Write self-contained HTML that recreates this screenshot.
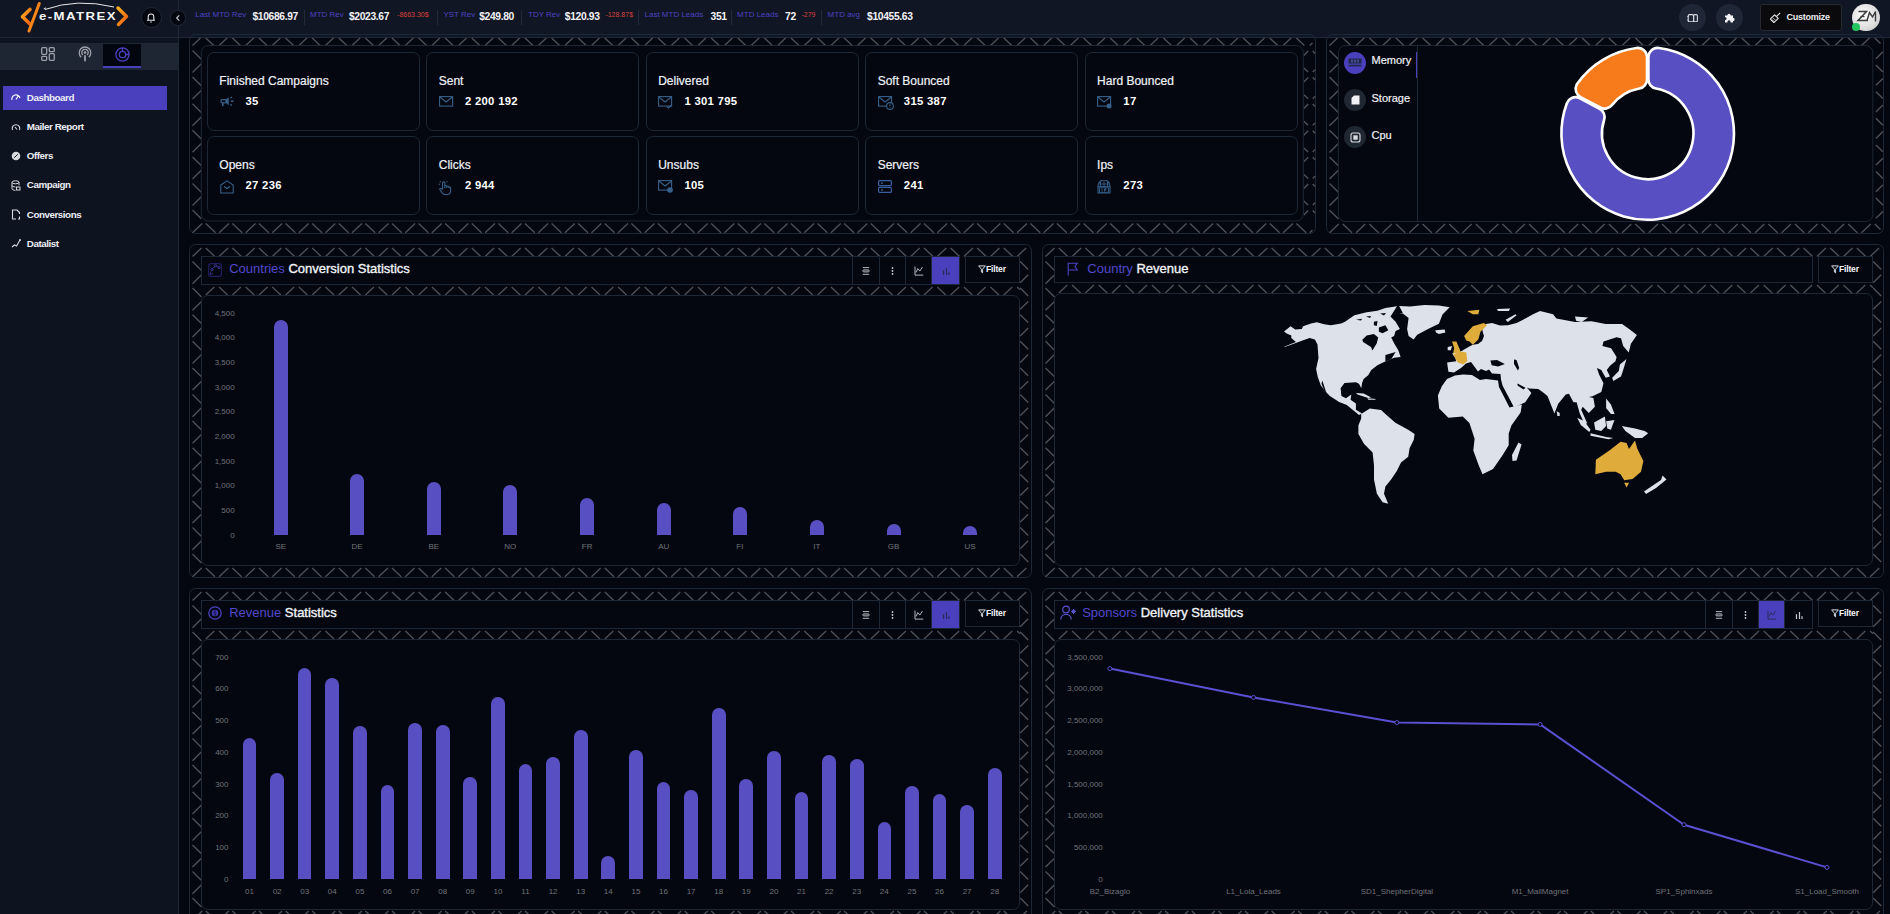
<!DOCTYPE html><html><head><meta charset="utf-8"><style>
*{box-sizing:border-box;margin:0;padding:0}
html,body{width:1890px;height:914px;overflow:hidden;background:#04070f;font-family:"Liberation Sans", sans-serif;color:#eef0f6}
.a{position:absolute}
.t{position:absolute;white-space:nowrap;line-height:1}
</style></head><body>

<div class="a" style="left:0;top:0;width:1890px;height:37px;background:#111624"></div>
<div class="a" style="left:0;top:37px;width:178px;height:877px;background:#0e1320"></div>
<div class="a" style="left:0;top:37px;width:1890px;height:1px;background:#1f2836"></div>
<div class="a" style="left:178px;top:0;width:1px;height:914px;background:#1f2836"></div>
<svg class="a" style="left:0;top:0" width="1890" height="914" viewBox="0 0 1890 914">
<g fill="none" stroke="#4d5058" stroke-width="1.4" stroke-linecap="butt">
<rect x="189.5" y="34.5" width="1126.0" height="199.0" rx="6" fill="none" stroke="#1d2735" stroke-width="1"/>
<path d="M192.5 45.5L200.5 38.0M205.8 38.0L213.8 45.5M219.1 45.5L227.1 38.0M232.4 38.0L240.4 45.5M245.7 45.5L253.7 38.0M259.0 38.0L267.0 45.5M272.3 45.5L280.3 38.0M285.6 38.0L293.6 45.5M298.9 45.5L306.9 38.0M312.2 38.0L320.2 45.5M325.5 45.5L333.5 38.0M338.8 38.0L346.8 45.5M352.1 45.5L360.1 38.0M365.4 38.0L373.4 45.5M378.7 45.5L386.7 38.0M392.0 38.0L400.0 45.5M405.3 45.5L413.3 38.0M418.6 38.0L426.6 45.5M431.9 45.5L439.9 38.0M445.2 38.0L453.2 45.5M458.5 45.5L466.5 38.0M471.8 38.0L479.8 45.5M485.1 45.5L493.1 38.0M498.4 38.0L506.4 45.5M511.7 45.5L519.7 38.0M525.0 38.0L533.0 45.5M538.3 45.5L546.3 38.0M551.6 38.0L559.6 45.5M564.9 45.5L572.9 38.0M578.2 38.0L586.2 45.5M591.5 45.5L599.5 38.0M604.8 38.0L612.8 45.5M618.1 45.5L626.1 38.0M631.4 38.0L639.4 45.5M644.7 45.5L652.7 38.0M658.0 38.0L666.0 45.5M671.3 45.5L679.3 38.0M684.6 38.0L692.6 45.5M697.9 45.5L705.9 38.0M711.2 38.0L719.2 45.5M724.5 45.5L732.5 38.0M737.8 38.0L745.8 45.5M751.1 45.5L759.1 38.0M764.4 38.0L772.4 45.5M777.7 45.5L785.7 38.0M791.0 38.0L799.0 45.5M804.3 45.5L812.3 38.0M817.6 38.0L825.6 45.5M830.9 45.5L838.9 38.0M844.2 38.0L852.2 45.5M857.5 45.5L865.5 38.0M870.8 38.0L878.8 45.5M884.1 45.5L892.1 38.0M897.4 38.0L905.4 45.5M910.7 45.5L918.7 38.0M924.0 38.0L932.0 45.5M937.3 45.5L945.3 38.0M950.6 38.0L958.6 45.5M963.9 45.5L971.9 38.0M977.2 38.0L985.2 45.5M990.5 45.5L998.5 38.0M1003.8 38.0L1011.8 45.5M1017.1 45.5L1025.1 38.0M1030.4 38.0L1038.4 45.5M1043.7 45.5L1051.7 38.0M1057.0 38.0L1065.0 45.5M1070.3 45.5L1078.3 38.0M1083.6 38.0L1091.6 45.5M1096.9 45.5L1104.9 38.0M1110.2 38.0L1118.2 45.5M1123.5 45.5L1131.5 38.0M1136.8 38.0L1144.8 45.5M1150.1 45.5L1158.1 38.0M1163.4 38.0L1171.4 45.5M1176.7 45.5L1184.7 38.0M1190.0 38.0L1198.0 45.5M1203.3 45.5L1211.3 38.0M1216.6 38.0L1224.6 45.5M1229.9 45.5L1237.9 38.0M1243.2 38.0L1251.2 45.5M1256.5 45.5L1264.5 38.0M1269.8 38.0L1277.8 45.5M1283.1 45.5L1291.1 38.0M1296.4 38.0L1304.4 45.5M1309.7 45.5L1312.5 42.9"/>
<path d="M192.5 232.7L202.3 223.5M205.8 223.5L215.6 232.7M219.1 232.7L228.9 223.5M232.4 223.5L242.2 232.7M245.7 232.7L255.5 223.5M259.0 223.5L268.8 232.7M272.3 232.7L282.1 223.5M285.6 223.5L295.4 232.7M298.9 232.7L308.7 223.5M312.2 223.5L322.0 232.7M325.5 232.7L335.3 223.5M338.8 223.5L348.6 232.7M352.1 232.7L361.9 223.5M365.4 223.5L375.2 232.7M378.7 232.7L388.5 223.5M392.0 223.5L401.8 232.7M405.3 232.7L415.1 223.5M418.6 223.5L428.4 232.7M431.9 232.7L441.7 223.5M445.2 223.5L455.0 232.7M458.5 232.7L468.3 223.5M471.8 223.5L481.6 232.7M485.1 232.7L494.9 223.5M498.4 223.5L508.2 232.7M511.7 232.7L521.5 223.5M525.0 223.5L534.8 232.7M538.3 232.7L548.1 223.5M551.6 223.5L561.4 232.7M564.9 232.7L574.7 223.5M578.2 223.5L588.0 232.7M591.5 232.7L601.3 223.5M604.8 223.5L614.6 232.7M618.1 232.7L627.9 223.5M631.4 223.5L641.2 232.7M644.7 232.7L654.5 223.5M658.0 223.5L667.8 232.7M671.3 232.7L681.1 223.5M684.6 223.5L694.4 232.7M697.9 232.7L707.7 223.5M711.2 223.5L721.0 232.7M724.5 232.7L734.3 223.5M737.8 223.5L747.6 232.7M751.1 232.7L760.9 223.5M764.4 223.5L774.2 232.7M777.7 232.7L787.5 223.5M791.0 223.5L800.8 232.7M804.3 232.7L814.1 223.5M817.6 223.5L827.4 232.7M830.9 232.7L840.7 223.5M844.2 223.5L854.0 232.7M857.5 232.7L867.3 223.5M870.8 223.5L880.6 232.7M884.1 232.7L893.9 223.5M897.4 223.5L907.2 232.7M910.7 232.7L920.5 223.5M924.0 223.5L933.8 232.7M937.3 232.7L947.1 223.5M950.6 223.5L960.4 232.7M963.9 232.7L973.7 223.5M977.2 223.5L987.0 232.7M990.5 232.7L1000.3 223.5M1003.8 223.5L1013.6 232.7M1017.1 232.7L1026.9 223.5M1030.4 223.5L1040.2 232.7M1043.7 232.7L1053.5 223.5M1057.0 223.5L1066.8 232.7M1070.3 232.7L1080.1 223.5M1083.6 223.5L1093.4 232.7M1096.9 232.7L1106.7 223.5M1110.2 223.5L1120.0 232.7M1123.5 232.7L1133.3 223.5M1136.8 223.5L1146.6 232.7M1150.1 232.7L1159.9 223.5M1163.4 223.5L1173.2 232.7M1176.7 232.7L1186.5 223.5M1190.0 223.5L1199.8 232.7M1203.3 232.7L1213.1 223.5M1216.6 223.5L1226.4 232.7M1229.9 232.7L1239.7 223.5M1243.2 223.5L1253.0 232.7M1256.5 232.7L1266.3 223.5M1269.8 223.5L1279.6 232.7M1283.1 232.7L1292.9 223.5M1296.4 223.5L1306.2 232.7M1309.7 232.7L1312.5 230.1"/>
<path d="M192.5 50.5L201.3 59.2M201.3 63.8L192.5 72.5M192.5 77.1L201.3 85.8M201.3 90.4L192.5 99.1M192.5 103.7L201.3 112.4M201.3 117.0L192.5 125.7M192.5 130.3L201.3 139.0M201.3 143.6L192.5 152.3M192.5 156.9L201.3 165.6M201.3 170.2L192.5 178.9M192.5 183.5L201.3 192.2M201.3 196.8L192.5 205.5M192.5 210.1L201.3 218.8"/>
<path d="M1303.8 55.4L1308.2 50.9M1312.7 50.9L1315.2 53.4M1303.8 68.1L1308.2 72.1M1312.7 72.1L1315.2 69.7M1303.8 82.0L1308.2 77.5M1312.7 77.5L1315.2 80.0M1303.8 94.7L1308.2 98.7M1312.7 98.7L1315.2 96.3M1303.8 108.6L1308.2 104.1M1312.7 104.1L1315.2 106.6M1303.8 121.3L1308.2 125.3M1312.7 125.3L1315.2 122.9M1303.8 135.2L1308.2 130.7M1312.7 130.7L1315.2 133.2M1303.8 147.9L1308.2 151.9M1312.7 151.9L1315.2 149.5M1303.8 161.8L1308.2 157.3M1312.7 157.3L1315.2 159.8M1303.8 174.5L1308.2 178.5M1312.7 178.5L1315.2 176.1M1303.8 188.4L1308.2 183.9M1312.7 183.9L1315.2 186.4M1303.8 201.1L1308.2 205.1M1312.7 205.1L1315.2 202.7M1303.8 215.0L1308.2 210.5M1312.7 210.5L1315.2 213.0"/>
<rect x="1326.5" y="34.5" width="557.0" height="199.0" rx="6" fill="none" stroke="#1d2735" stroke-width="1"/>
<path d="M1329.5 45.5L1337.5 38.0M1342.8 38.0L1350.8 45.5M1356.1 45.5L1364.1 38.0M1369.4 38.0L1377.4 45.5M1382.7 45.5L1390.7 38.0M1396.0 38.0L1404.0 45.5M1409.3 45.5L1417.3 38.0M1422.6 38.0L1430.6 45.5M1435.9 45.5L1443.9 38.0M1449.2 38.0L1457.2 45.5M1462.5 45.5L1470.5 38.0M1475.8 38.0L1483.8 45.5M1489.1 45.5L1497.1 38.0M1502.4 38.0L1510.4 45.5M1515.7 45.5L1523.7 38.0M1529.0 38.0L1537.0 45.5M1542.3 45.5L1550.3 38.0M1555.6 38.0L1563.6 45.5M1568.9 45.5L1576.9 38.0M1582.2 38.0L1590.2 45.5M1595.5 45.5L1603.5 38.0M1608.8 38.0L1616.8 45.5M1622.1 45.5L1630.1 38.0M1635.4 38.0L1643.4 45.5M1648.7 45.5L1656.7 38.0M1662.0 38.0L1670.0 45.5M1675.3 45.5L1683.3 38.0M1688.6 38.0L1696.6 45.5M1701.9 45.5L1709.9 38.0M1715.2 38.0L1723.2 45.5M1728.5 45.5L1736.5 38.0M1741.8 38.0L1749.8 45.5M1755.1 45.5L1763.1 38.0M1768.4 38.0L1776.4 45.5M1781.7 45.5L1789.7 38.0M1795.0 38.0L1803.0 45.5M1808.3 45.5L1816.3 38.0M1821.6 38.0L1829.6 45.5M1834.9 45.5L1842.9 38.0M1848.2 38.0L1856.2 45.5M1861.5 45.5L1869.5 38.0M1874.8 38.0L1880.5 43.4"/>
<path d="M1329.5 232.7L1338.7 224.0M1342.8 224.0L1352.0 232.7M1356.1 232.7L1365.3 224.0M1369.4 224.0L1378.6 232.7M1382.7 232.7L1391.9 224.0M1396.0 224.0L1405.2 232.7M1409.3 232.7L1418.5 224.0M1422.6 224.0L1431.8 232.7M1435.9 232.7L1445.1 224.0M1449.2 224.0L1458.4 232.7M1462.5 232.7L1471.7 224.0M1475.8 224.0L1485.0 232.7M1489.1 232.7L1498.3 224.0M1502.4 224.0L1511.6 232.7M1515.7 232.7L1524.9 224.0M1529.0 224.0L1538.2 232.7M1542.3 232.7L1551.5 224.0M1555.6 224.0L1564.8 232.7M1568.9 232.7L1578.1 224.0M1582.2 224.0L1591.4 232.7M1595.5 232.7L1604.7 224.0M1608.8 224.0L1618.0 232.7M1622.1 232.7L1631.3 224.0M1635.4 224.0L1644.6 232.7M1648.7 232.7L1657.9 224.0M1662.0 224.0L1671.2 232.7M1675.3 232.7L1684.5 224.0M1688.6 224.0L1697.8 232.7M1701.9 232.7L1711.1 224.0M1715.2 224.0L1724.4 232.7M1728.5 232.7L1737.7 224.0M1741.8 224.0L1751.0 232.7M1755.1 232.7L1764.3 224.0M1768.4 224.0L1777.6 232.7M1781.7 232.7L1790.9 224.0M1795.0 224.0L1804.2 232.7M1808.3 232.7L1817.5 224.0M1821.6 224.0L1830.8 232.7M1834.9 232.7L1844.1 224.0M1848.2 224.0L1857.4 232.7M1861.5 232.7L1870.7 224.0M1874.8 224.0L1880.5 229.4"/>
<path d="M1329.5 50.5L1338.4 59.3M1338.4 63.8L1329.5 72.6M1329.5 77.1L1338.4 85.9M1338.4 90.4L1329.5 99.2M1329.5 103.7L1338.4 112.5M1338.4 117.0L1329.5 125.8M1329.5 130.3L1338.4 139.1M1338.4 143.6L1329.5 152.4M1329.5 156.9L1338.4 165.7M1338.4 170.2L1329.5 179.0M1329.5 183.5L1338.4 192.3M1338.4 196.8L1329.5 205.6M1329.5 210.1L1338.4 218.9"/>
<path d="M1882.9 51.8L1875.9 58.7M1875.9 65.1L1882.9 72.0M1882.9 78.4L1875.9 85.3M1875.9 91.7L1882.9 98.6M1882.9 105.0L1875.9 111.9M1875.9 118.3L1882.9 125.2M1882.9 131.6L1875.9 138.5M1875.9 144.9L1882.9 151.8M1882.9 158.2L1875.9 165.1M1875.9 171.5L1882.9 178.4M1882.9 184.8L1875.9 191.7M1875.9 198.1L1882.9 205.0M1882.9 211.4L1875.9 218.3"/>
<rect x="189.5" y="244.5" width="842.0" height="333.0" rx="6" fill="none" stroke="#1d2735" stroke-width="1"/>
<path d="M192.5 256.5L201.5 248.0M205.8 248.0L214.8 256.5M219.1 256.5L228.1 248.0M232.4 248.0L241.4 256.5M245.7 256.5L254.7 248.0M259.0 248.0L268.0 256.5M272.3 256.5L281.3 248.0M285.6 248.0L294.6 256.5M298.9 256.5L307.9 248.0M312.2 248.0L321.2 256.5M325.5 256.5L334.5 248.0M338.8 248.0L347.8 256.5M352.1 256.5L361.1 248.0M365.4 248.0L374.4 256.5M378.7 256.5L387.7 248.0M392.0 248.0L401.0 256.5M405.3 256.5L414.3 248.0M418.6 248.0L427.6 256.5M431.9 256.5L440.9 248.0M445.2 248.0L454.2 256.5M458.5 256.5L467.5 248.0M471.8 248.0L480.8 256.5M485.1 256.5L494.1 248.0M498.4 248.0L507.4 256.5M511.7 256.5L520.7 248.0M525.0 248.0L534.0 256.5M538.3 256.5L547.3 248.0M551.6 248.0L560.6 256.5M564.9 256.5L573.9 248.0M578.2 248.0L587.2 256.5M591.5 256.5L600.5 248.0M604.8 248.0L613.8 256.5M618.1 256.5L627.1 248.0M631.4 248.0L640.4 256.5M644.7 256.5L653.7 248.0M658.0 248.0L667.0 256.5M671.3 256.5L680.3 248.0M684.6 248.0L693.6 256.5M697.9 256.5L706.9 248.0M711.2 248.0L720.2 256.5M724.5 256.5L733.5 248.0M737.8 248.0L746.8 256.5M751.1 256.5L760.1 248.0M764.4 248.0L773.4 256.5M777.7 256.5L786.7 248.0M791.0 248.0L800.0 256.5M804.3 256.5L813.3 248.0M817.6 248.0L826.6 256.5M830.9 256.5L839.9 248.0M844.2 248.0L853.2 256.5M857.5 256.5L866.5 248.0M870.8 248.0L879.8 256.5M884.1 256.5L893.1 248.0M897.4 248.0L906.4 256.5M910.7 256.5L919.7 248.0M924.0 248.0L933.0 256.5M937.3 256.5L946.3 248.0M950.6 248.0L959.6 256.5M963.9 256.5L972.9 248.0M977.2 248.0L986.2 256.5M990.5 256.5L999.5 248.0M1003.8 248.0L1012.8 256.5M1017.1 256.5L1026.1 248.0"/>
<path d="M192.5 576.7L201.7 568.0M205.8 568.0L215.0 576.7M219.1 576.7L228.3 568.0M232.4 568.0L241.6 576.7M245.7 576.7L254.9 568.0M259.0 568.0L268.2 576.7M272.3 576.7L281.5 568.0M285.6 568.0L294.8 576.7M298.9 576.7L308.1 568.0M312.2 568.0L321.4 576.7M325.5 576.7L334.7 568.0M338.8 568.0L348.0 576.7M352.1 576.7L361.3 568.0M365.4 568.0L374.6 576.7M378.7 576.7L387.9 568.0M392.0 568.0L401.2 576.7M405.3 576.7L414.5 568.0M418.6 568.0L427.8 576.7M431.9 576.7L441.1 568.0M445.2 568.0L454.4 576.7M458.5 576.7L467.7 568.0M471.8 568.0L481.0 576.7M485.1 576.7L494.3 568.0M498.4 568.0L507.6 576.7M511.7 576.7L520.9 568.0M525.0 568.0L534.2 576.7M538.3 576.7L547.5 568.0M551.6 568.0L560.8 576.7M564.9 576.7L574.1 568.0M578.2 568.0L587.4 576.7M591.5 576.7L600.7 568.0M604.8 568.0L614.0 576.7M618.1 576.7L627.3 568.0M631.4 568.0L640.6 576.7M644.7 576.7L653.9 568.0M658.0 568.0L667.2 576.7M671.3 576.7L680.5 568.0M684.6 568.0L693.8 576.7M697.9 576.7L707.1 568.0M711.2 568.0L720.4 576.7M724.5 576.7L733.7 568.0M737.8 568.0L747.0 576.7M751.1 576.7L760.3 568.0M764.4 568.0L773.6 576.7M777.7 576.7L786.9 568.0M791.0 568.0L800.2 576.7M804.3 576.7L813.5 568.0M817.6 568.0L826.8 576.7M830.9 576.7L840.1 568.0M844.2 568.0L853.4 576.7M857.5 576.7L866.7 568.0M870.8 568.0L880.0 576.7M884.1 576.7L893.3 568.0M897.4 568.0L906.6 576.7M910.7 576.7L919.9 568.0M924.0 568.0L933.2 576.7M937.3 576.7L946.5 568.0M950.6 568.0L959.8 576.7M963.9 576.7L973.1 568.0M977.2 568.0L986.4 576.7M990.5 576.7L999.7 568.0M1003.8 568.0L1013.0 576.7M1017.1 576.7L1026.3 568.0"/>
<path d="M192.6 257.0L192.5 257.1M192.5 261.5L201.5 270.4M201.5 274.8L192.5 283.7M192.5 288.1L201.5 297.0M201.5 301.4L192.5 310.3M192.5 314.7L201.5 323.6M201.5 328.0L192.5 336.9M192.5 341.3L201.5 350.2M201.5 354.6L192.5 363.5M192.5 367.9L201.5 376.8M201.5 381.2L192.5 390.1M192.5 394.5L201.5 403.4M201.5 407.8L192.5 416.7M192.5 421.1L201.5 430.0M201.5 434.4L192.5 443.3M192.5 447.7L201.5 456.6M201.5 461.0L192.5 469.9M192.5 474.3L201.5 483.2M201.5 487.6L192.5 496.5M192.5 500.9L201.5 509.8M201.5 514.2L192.5 523.1M192.5 527.5L201.5 536.4M201.5 540.8L192.5 549.7M192.5 554.1L201.5 563.0"/>
<path d="M1020.2 261.5L1028.2 269.4M1028.2 274.8L1020.2 282.7M1020.2 288.1L1028.2 296.0M1028.2 301.4L1020.2 309.3M1020.2 314.7L1028.2 322.6M1028.2 328.0L1020.2 335.9M1020.2 341.3L1028.2 349.2M1028.2 354.6L1020.2 362.5M1020.2 367.9L1028.2 375.8M1028.2 381.2L1020.2 389.1M1020.2 394.5L1028.2 402.4M1028.2 407.8L1020.2 415.7M1020.2 421.1L1028.2 429.0M1028.2 434.4L1020.2 442.3M1020.2 447.7L1028.2 455.6M1028.2 461.0L1020.2 468.9M1020.2 474.3L1028.2 482.2M1028.2 487.6L1020.2 495.5M1020.2 500.9L1028.2 508.8M1028.2 514.2L1020.2 522.1M1020.2 527.5L1028.2 535.4M1028.2 540.8L1020.2 548.7M1020.2 554.1L1028.2 562.0"/>
<path d="M205.8 295.0L214.3 287.0M219.1 287.0L227.6 295.0M232.4 295.0L240.9 287.0M245.7 287.0L254.2 295.0M259.0 295.0L267.5 287.0M272.3 287.0L280.8 295.0M285.6 295.0L294.1 287.0M298.9 287.0L307.4 295.0M312.2 295.0L320.7 287.0M325.5 287.0L334.0 295.0M338.8 295.0L347.3 287.0M352.1 287.0L360.6 295.0M365.4 295.0L373.9 287.0M378.7 287.0L387.2 295.0M392.0 295.0L400.5 287.0M405.3 287.0L413.8 295.0M418.6 295.0L427.1 287.0M431.9 287.0L440.4 295.0M445.2 295.0L453.7 287.0M458.5 287.0L467.0 295.0M471.8 295.0L480.3 287.0M485.1 287.0L493.6 295.0M498.4 295.0L506.9 287.0M511.7 287.0L520.2 295.0M525.0 295.0L533.5 287.0M538.3 287.0L546.8 295.0M551.6 295.0L560.1 287.0M564.9 287.0L573.4 295.0M578.2 295.0L586.7 287.0M591.5 287.0L600.0 295.0M604.8 295.0L613.3 287.0M618.1 287.0L626.6 295.0M631.4 295.0L639.9 287.0M644.7 287.0L653.2 295.0M658.0 295.0L666.5 287.0M671.3 287.0L679.8 295.0M684.6 295.0L693.1 287.0M697.9 287.0L706.4 295.0M711.2 295.0L719.7 287.0M724.5 287.0L733.0 295.0M737.8 295.0L746.3 287.0M751.1 287.0L759.6 295.0M764.4 295.0L772.9 287.0M777.7 287.0L786.2 295.0M791.0 295.0L799.5 287.0M804.3 287.0L812.8 295.0M817.6 295.0L826.1 287.0M830.9 287.0L839.4 295.0M844.2 295.0L852.7 287.0M857.5 287.0L866.0 295.0M870.8 295.0L879.3 287.0M884.1 287.0L892.6 295.0M897.4 295.0L905.9 287.0M910.7 287.0L919.2 295.0M924.0 295.0L932.5 287.0M937.3 287.0L945.8 295.0M950.6 295.0L959.1 287.0M963.9 287.0L972.4 295.0M977.2 295.0L985.7 287.0M990.5 287.0L999.0 295.0M1003.8 295.0L1012.3 287.0M1017.1 287.0L1020.0 289.7"/>
<rect x="1042.5" y="244.5" width="841.0" height="333.0" rx="6" fill="none" stroke="#1d2735" stroke-width="1"/>
<path d="M1045.5 256.5L1054.5 248.0M1058.8 248.0L1067.8 256.5M1072.1 256.5L1081.1 248.0M1085.4 248.0L1094.4 256.5M1098.7 256.5L1107.7 248.0M1112.0 248.0L1121.0 256.5M1125.3 256.5L1134.3 248.0M1138.6 248.0L1147.6 256.5M1151.9 256.5L1160.9 248.0M1165.2 248.0L1174.2 256.5M1178.5 256.5L1187.5 248.0M1191.8 248.0L1200.8 256.5M1205.1 256.5L1214.1 248.0M1218.4 248.0L1227.4 256.5M1231.7 256.5L1240.7 248.0M1245.0 248.0L1254.0 256.5M1258.3 256.5L1267.3 248.0M1271.6 248.0L1280.6 256.5M1284.9 256.5L1293.9 248.0M1298.2 248.0L1307.2 256.5M1311.5 256.5L1320.5 248.0M1324.8 248.0L1333.8 256.5M1338.1 256.5L1347.1 248.0M1351.4 248.0L1360.4 256.5M1364.7 256.5L1373.7 248.0M1378.0 248.0L1387.0 256.5M1391.3 256.5L1400.3 248.0M1404.6 248.0L1413.6 256.5M1417.9 256.5L1426.9 248.0M1431.2 248.0L1440.2 256.5M1444.5 256.5L1453.5 248.0M1457.8 248.0L1466.8 256.5M1471.1 256.5L1480.1 248.0M1484.4 248.0L1493.4 256.5M1497.7 256.5L1506.7 248.0M1511.0 248.0L1520.0 256.5M1524.3 256.5L1533.3 248.0M1537.6 248.0L1546.6 256.5M1550.9 256.5L1559.9 248.0M1564.2 248.0L1573.2 256.5M1577.5 256.5L1586.5 248.0M1590.8 248.0L1599.8 256.5M1604.1 256.5L1613.1 248.0M1617.4 248.0L1626.4 256.5M1630.7 256.5L1639.7 248.0M1644.0 248.0L1653.0 256.5M1657.3 256.5L1666.3 248.0M1670.6 248.0L1679.6 256.5M1683.9 256.5L1692.9 248.0M1697.2 248.0L1706.2 256.5M1710.5 256.5L1719.5 248.0M1723.8 248.0L1732.8 256.5M1737.1 256.5L1746.1 248.0M1750.4 248.0L1759.4 256.5M1763.7 256.5L1772.7 248.0M1777.0 248.0L1786.0 256.5M1790.3 256.5L1799.3 248.0M1803.6 248.0L1812.6 256.5M1816.9 256.5L1825.9 248.0M1830.2 248.0L1839.2 256.5M1843.5 256.5L1852.5 248.0M1856.8 248.0L1865.8 256.5M1870.1 256.5L1879.1 248.0"/>
<path d="M1045.5 576.7L1054.7 568.0M1058.8 568.0L1068.0 576.7M1072.1 576.7L1081.3 568.0M1085.4 568.0L1094.6 576.7M1098.7 576.7L1107.9 568.0M1112.0 568.0L1121.2 576.7M1125.3 576.7L1134.5 568.0M1138.6 568.0L1147.8 576.7M1151.9 576.7L1161.1 568.0M1165.2 568.0L1174.4 576.7M1178.5 576.7L1187.7 568.0M1191.8 568.0L1201.0 576.7M1205.1 576.7L1214.3 568.0M1218.4 568.0L1227.6 576.7M1231.7 576.7L1240.9 568.0M1245.0 568.0L1254.2 576.7M1258.3 576.7L1267.5 568.0M1271.6 568.0L1280.8 576.7M1284.9 576.7L1294.1 568.0M1298.2 568.0L1307.4 576.7M1311.5 576.7L1320.7 568.0M1324.8 568.0L1334.0 576.7M1338.1 576.7L1347.3 568.0M1351.4 568.0L1360.6 576.7M1364.7 576.7L1373.9 568.0M1378.0 568.0L1387.2 576.7M1391.3 576.7L1400.5 568.0M1404.6 568.0L1413.8 576.7M1417.9 576.7L1427.1 568.0M1431.2 568.0L1440.4 576.7M1444.5 576.7L1453.7 568.0M1457.8 568.0L1467.0 576.7M1471.1 576.7L1480.3 568.0M1484.4 568.0L1493.6 576.7M1497.7 576.7L1506.9 568.0M1511.0 568.0L1520.2 576.7M1524.3 576.7L1533.5 568.0M1537.6 568.0L1546.8 576.7M1550.9 576.7L1560.1 568.0M1564.2 568.0L1573.4 576.7M1577.5 576.7L1586.7 568.0M1590.8 568.0L1600.0 576.7M1604.1 576.7L1613.3 568.0M1617.4 568.0L1626.6 576.7M1630.7 576.7L1639.9 568.0M1644.0 568.0L1653.2 576.7M1657.3 576.7L1666.5 568.0M1670.6 568.0L1679.8 576.7M1683.9 576.7L1693.1 568.0M1697.2 568.0L1706.4 576.7M1710.5 576.7L1719.7 568.0M1723.8 568.0L1733.0 576.7M1737.1 576.7L1746.3 568.0M1750.4 568.0L1759.6 576.7M1763.7 576.7L1772.9 568.0M1777.0 568.0L1786.2 576.7M1790.3 576.7L1799.5 568.0M1803.6 568.0L1812.8 576.7M1816.9 576.7L1826.1 568.0M1830.2 568.0L1839.4 576.7M1843.5 576.7L1852.7 568.0M1856.8 568.0L1866.0 576.7M1870.1 576.7L1879.3 568.0"/>
<path d="M1045.6 257.0L1045.5 257.1M1045.5 261.5L1054.5 270.4M1054.5 274.8L1045.5 283.7M1045.5 288.1L1054.5 297.0M1054.5 301.4L1045.5 310.3M1045.5 314.7L1054.5 323.6M1054.5 328.0L1045.5 336.9M1045.5 341.3L1054.5 350.2M1054.5 354.6L1045.5 363.5M1045.5 367.9L1054.5 376.8M1054.5 381.2L1045.5 390.1M1045.5 394.5L1054.5 403.4M1054.5 407.8L1045.5 416.7M1045.5 421.1L1054.5 430.0M1054.5 434.4L1045.5 443.3M1045.5 447.7L1054.5 456.6M1054.5 461.0L1045.5 469.9M1045.5 474.3L1054.5 483.2M1054.5 487.6L1045.5 496.5M1045.5 500.9L1054.5 509.8M1054.5 514.2L1045.5 523.1M1045.5 527.5L1054.5 536.4M1054.5 540.8L1045.5 549.7M1045.5 554.1L1054.5 563.0"/>
<path d="M1873.2 261.5L1881.2 269.4M1881.2 274.8L1873.2 282.7M1873.2 288.1L1881.2 296.0M1881.2 301.4L1873.2 309.3M1873.2 314.7L1881.2 322.6M1881.2 328.0L1873.2 335.9M1873.2 341.3L1881.2 349.2M1881.2 354.6L1873.2 362.5M1873.2 367.9L1881.2 375.8M1881.2 381.2L1873.2 389.1M1873.2 394.5L1881.2 402.4M1881.2 407.8L1873.2 415.7M1873.2 421.1L1881.2 429.0M1881.2 434.4L1873.2 442.3M1873.2 447.7L1881.2 455.6M1881.2 461.0L1873.2 468.9M1873.2 474.3L1881.2 482.2M1881.2 487.6L1873.2 495.5M1873.2 500.9L1881.2 508.8M1881.2 514.2L1873.2 522.1M1873.2 527.5L1881.2 535.4M1881.2 540.8L1873.2 548.7M1873.2 554.1L1881.2 562.0"/>
<path d="M1058.8 293.0L1067.3 285.0M1072.1 285.0L1080.6 293.0M1085.4 293.0L1093.9 285.0M1098.7 285.0L1107.2 293.0M1112.0 293.0L1120.5 285.0M1125.3 285.0L1133.8 293.0M1138.6 293.0L1147.1 285.0M1151.9 285.0L1160.4 293.0M1165.2 293.0L1173.7 285.0M1178.5 285.0L1187.0 293.0M1191.8 293.0L1200.3 285.0M1205.1 285.0L1213.6 293.0M1218.4 293.0L1226.9 285.0M1231.7 285.0L1240.2 293.0M1245.0 293.0L1253.5 285.0M1258.3 285.0L1266.8 293.0M1271.6 293.0L1280.1 285.0M1284.9 285.0L1293.4 293.0M1298.2 293.0L1306.7 285.0M1311.5 285.0L1320.0 293.0M1324.8 293.0L1333.3 285.0M1338.1 285.0L1346.6 293.0M1351.4 293.0L1359.9 285.0M1364.7 285.0L1373.2 293.0M1378.0 293.0L1386.5 285.0M1391.3 285.0L1399.8 293.0M1404.6 293.0L1413.1 285.0M1417.9 285.0L1426.4 293.0M1431.2 293.0L1439.7 285.0M1444.5 285.0L1453.0 293.0M1457.8 293.0L1466.3 285.0M1471.1 285.0L1479.6 293.0M1484.4 293.0L1492.9 285.0M1497.7 285.0L1506.2 293.0M1511.0 293.0L1519.5 285.0M1524.3 285.0L1532.8 293.0M1537.6 293.0L1546.1 285.0M1550.9 285.0L1559.4 293.0M1564.2 293.0L1572.7 285.0M1577.5 285.0L1586.0 293.0M1590.8 293.0L1599.3 285.0M1604.1 285.0L1612.6 293.0M1617.4 293.0L1625.9 285.0M1630.7 285.0L1639.2 293.0M1644.0 293.0L1652.5 285.0M1657.3 285.0L1665.8 293.0M1670.6 293.0L1679.1 285.0M1683.9 285.0L1692.4 293.0M1697.2 293.0L1705.7 285.0M1710.5 285.0L1719.0 293.0M1723.8 293.0L1732.3 285.0M1737.1 285.0L1745.6 293.0M1750.4 293.0L1758.9 285.0M1763.7 285.0L1772.2 293.0M1777.0 293.0L1785.5 285.0M1790.3 285.0L1798.8 293.0M1803.6 293.0L1812.1 285.0M1816.9 285.0L1825.4 293.0M1830.2 293.0L1838.7 285.0M1843.5 285.0L1852.0 293.0M1856.8 293.0L1865.3 285.0M1870.1 285.0L1873.0 287.7"/>
<rect x="189.5" y="588.5" width="842.0" height="332.5" rx="6" fill="none" stroke="#1d2735" stroke-width="1"/>
<path d="M192.5 600.5L201.5 592.0M205.8 592.0L214.8 600.5M219.1 600.5L228.1 592.0M232.4 592.0L241.4 600.5M245.7 600.5L254.7 592.0M259.0 592.0L268.0 600.5M272.3 600.5L281.3 592.0M285.6 592.0L294.6 600.5M298.9 600.5L307.9 592.0M312.2 592.0L321.2 600.5M325.5 600.5L334.5 592.0M338.8 592.0L347.8 600.5M352.1 600.5L361.1 592.0M365.4 592.0L374.4 600.5M378.7 600.5L387.7 592.0M392.0 592.0L401.0 600.5M405.3 600.5L414.3 592.0M418.6 592.0L427.6 600.5M431.9 600.5L440.9 592.0M445.2 592.0L454.2 600.5M458.5 600.5L467.5 592.0M471.8 592.0L480.8 600.5M485.1 600.5L494.1 592.0M498.4 592.0L507.4 600.5M511.7 600.5L520.7 592.0M525.0 592.0L534.0 600.5M538.3 600.5L547.3 592.0M551.6 592.0L560.6 600.5M564.9 600.5L573.9 592.0M578.2 592.0L587.2 600.5M591.5 600.5L600.5 592.0M604.8 592.0L613.8 600.5M618.1 600.5L627.1 592.0M631.4 592.0L640.4 600.5M644.7 600.5L653.7 592.0M658.0 592.0L667.0 600.5M671.3 600.5L680.3 592.0M684.6 592.0L693.6 600.5M697.9 600.5L706.9 592.0M711.2 592.0L720.2 600.5M724.5 600.5L733.5 592.0M737.8 592.0L746.8 600.5M751.1 600.5L760.1 592.0M764.4 592.0L773.4 600.5M777.7 600.5L786.7 592.0M791.0 592.0L800.0 600.5M804.3 600.5L813.3 592.0M817.6 592.0L826.6 600.5M830.9 600.5L839.9 592.0M844.2 592.0L853.2 600.5M857.5 600.5L866.5 592.0M870.8 592.0L879.8 600.5M884.1 600.5L893.1 592.0M897.4 592.0L906.4 600.5M910.7 600.5L919.7 592.0M924.0 592.0L933.0 600.5M937.3 600.5L946.3 592.0M950.6 592.0L959.6 600.5M963.9 600.5L972.9 592.0M977.2 592.0L986.2 600.5M990.5 600.5L999.5 592.0M1003.8 592.0L1012.8 600.5M1017.1 600.5L1026.1 592.0"/>
<path d="M192.5 920.2L202.3 911.0M205.8 911.0L215.6 920.2M219.1 920.2L228.9 911.0M232.4 911.0L242.2 920.2M245.7 920.2L255.5 911.0M259.0 911.0L268.8 920.2M272.3 920.2L282.1 911.0M285.6 911.0L295.4 920.2M298.9 920.2L308.7 911.0M312.2 911.0L322.0 920.2M325.5 920.2L335.3 911.0M338.8 911.0L348.6 920.2M352.1 920.2L361.9 911.0M365.4 911.0L375.2 920.2M378.7 920.2L388.5 911.0M392.0 911.0L401.8 920.2M405.3 920.2L415.1 911.0M418.6 911.0L428.4 920.2M431.9 920.2L441.7 911.0M445.2 911.0L455.0 920.2M458.5 920.2L468.3 911.0M471.8 911.0L481.6 920.2M485.1 920.2L494.9 911.0M498.4 911.0L508.2 920.2M511.7 920.2L521.5 911.0M525.0 911.0L534.8 920.2M538.3 920.2L548.1 911.0M551.6 911.0L561.4 920.2M564.9 920.2L574.7 911.0M578.2 911.0L588.0 920.2M591.5 920.2L601.3 911.0M604.8 911.0L614.6 920.2M618.1 920.2L627.9 911.0M631.4 911.0L641.2 920.2M644.7 920.2L654.5 911.0M658.0 911.0L667.8 920.2M671.3 920.2L681.1 911.0M684.6 911.0L694.4 920.2M697.9 920.2L707.7 911.0M711.2 911.0L721.0 920.2M724.5 920.2L734.3 911.0M737.8 911.0L747.6 920.2M751.1 920.2L760.9 911.0M764.4 911.0L774.2 920.2M777.7 920.2L787.5 911.0M791.0 911.0L800.8 920.2M804.3 920.2L814.1 911.0M817.6 911.0L827.4 920.2M830.9 920.2L840.7 911.0M844.2 911.0L854.0 920.2M857.5 920.2L867.3 911.0M870.8 911.0L880.6 920.2M884.1 920.2L893.9 911.0M897.4 911.0L907.2 920.2M910.7 920.2L920.5 911.0M924.0 911.0L933.8 920.2M937.3 920.2L947.1 911.0M950.6 911.0L960.4 920.2M963.9 920.2L973.7 911.0M977.2 911.0L987.0 920.2M990.5 920.2L1000.3 911.0M1003.8 911.0L1013.6 920.2M1017.1 920.2L1026.9 911.0"/>
<path d="M192.6 601.0L192.5 601.1M192.5 605.5L201.5 614.4M201.5 618.8L192.5 627.7M192.5 632.1L201.5 641.0M201.5 645.4L192.5 654.3M192.5 658.7L201.5 667.6M201.5 672.0L192.5 680.9M192.5 685.3L201.5 694.2M201.5 698.6L192.5 707.5M192.5 711.9L201.5 720.8M201.5 725.2L192.5 734.1M192.5 738.5L201.5 747.4M201.5 751.8L192.5 760.7M192.5 765.1L201.5 774.0M201.5 778.4L192.5 787.3M192.5 791.7L201.5 800.6M201.5 805.0L192.5 813.9M192.5 818.3L201.5 827.2M201.5 831.6L192.5 840.5M192.5 844.9L201.5 853.8M201.5 858.2L192.5 867.1M192.5 871.5L201.5 880.4M201.5 884.8L192.5 893.7M192.5 898.1L201.5 907.0"/>
<path d="M1020.2 605.5L1028.2 613.4M1028.2 618.8L1020.2 626.7M1020.2 632.1L1028.2 640.0M1028.2 645.4L1020.2 653.3M1020.2 658.7L1028.2 666.6M1028.2 672.0L1020.2 679.9M1020.2 685.3L1028.2 693.2M1028.2 698.6L1020.2 706.5M1020.2 711.9L1028.2 719.8M1028.2 725.2L1020.2 733.1M1020.2 738.5L1028.2 746.4M1028.2 751.8L1020.2 759.7M1020.2 765.1L1028.2 773.0M1028.2 778.4L1020.2 786.3M1020.2 791.7L1028.2 799.6M1028.2 805.0L1020.2 812.9M1020.2 818.3L1028.2 826.2M1028.2 831.6L1020.2 839.5M1020.2 844.9L1028.2 852.8M1028.2 858.2L1020.2 866.1M1020.2 871.5L1028.2 879.4M1028.2 884.8L1020.2 892.7M1020.2 898.1L1028.2 906.0"/>
<path d="M205.8 639.0L214.3 631.0M219.1 631.0L227.6 639.0M232.4 639.0L240.9 631.0M245.7 631.0L254.2 639.0M259.0 639.0L267.5 631.0M272.3 631.0L280.8 639.0M285.6 639.0L294.1 631.0M298.9 631.0L307.4 639.0M312.2 639.0L320.7 631.0M325.5 631.0L334.0 639.0M338.8 639.0L347.3 631.0M352.1 631.0L360.6 639.0M365.4 639.0L373.9 631.0M378.7 631.0L387.2 639.0M392.0 639.0L400.5 631.0M405.3 631.0L413.8 639.0M418.6 639.0L427.1 631.0M431.9 631.0L440.4 639.0M445.2 639.0L453.7 631.0M458.5 631.0L467.0 639.0M471.8 639.0L480.3 631.0M485.1 631.0L493.6 639.0M498.4 639.0L506.9 631.0M511.7 631.0L520.2 639.0M525.0 639.0L533.5 631.0M538.3 631.0L546.8 639.0M551.6 639.0L560.1 631.0M564.9 631.0L573.4 639.0M578.2 639.0L586.7 631.0M591.5 631.0L600.0 639.0M604.8 639.0L613.3 631.0M618.1 631.0L626.6 639.0M631.4 639.0L639.9 631.0M644.7 631.0L653.2 639.0M658.0 639.0L666.5 631.0M671.3 631.0L679.8 639.0M684.6 639.0L693.1 631.0M697.9 631.0L706.4 639.0M711.2 639.0L719.7 631.0M724.5 631.0L733.0 639.0M737.8 639.0L746.3 631.0M751.1 631.0L759.6 639.0M764.4 639.0L772.9 631.0M777.7 631.0L786.2 639.0M791.0 639.0L799.5 631.0M804.3 631.0L812.8 639.0M817.6 639.0L826.1 631.0M830.9 631.0L839.4 639.0M844.2 639.0L852.7 631.0M857.5 631.0L866.0 639.0M870.8 639.0L879.3 631.0M884.1 631.0L892.6 639.0M897.4 639.0L905.9 631.0M910.7 631.0L919.2 639.0M924.0 639.0L932.5 631.0M937.3 631.0L945.8 639.0M950.6 639.0L959.1 631.0M963.9 631.0L972.4 639.0M977.2 639.0L985.7 631.0M990.5 631.0L999.0 639.0M1003.8 639.0L1012.3 631.0M1017.1 631.0L1020.0 633.7"/>
<rect x="1042.5" y="588.5" width="841.0" height="332.5" rx="6" fill="none" stroke="#1d2735" stroke-width="1"/>
<path d="M1045.5 600.5L1054.5 592.0M1058.8 592.0L1067.8 600.5M1072.1 600.5L1081.1 592.0M1085.4 592.0L1094.4 600.5M1098.7 600.5L1107.7 592.0M1112.0 592.0L1121.0 600.5M1125.3 600.5L1134.3 592.0M1138.6 592.0L1147.6 600.5M1151.9 600.5L1160.9 592.0M1165.2 592.0L1174.2 600.5M1178.5 600.5L1187.5 592.0M1191.8 592.0L1200.8 600.5M1205.1 600.5L1214.1 592.0M1218.4 592.0L1227.4 600.5M1231.7 600.5L1240.7 592.0M1245.0 592.0L1254.0 600.5M1258.3 600.5L1267.3 592.0M1271.6 592.0L1280.6 600.5M1284.9 600.5L1293.9 592.0M1298.2 592.0L1307.2 600.5M1311.5 600.5L1320.5 592.0M1324.8 592.0L1333.8 600.5M1338.1 600.5L1347.1 592.0M1351.4 592.0L1360.4 600.5M1364.7 600.5L1373.7 592.0M1378.0 592.0L1387.0 600.5M1391.3 600.5L1400.3 592.0M1404.6 592.0L1413.6 600.5M1417.9 600.5L1426.9 592.0M1431.2 592.0L1440.2 600.5M1444.5 600.5L1453.5 592.0M1457.8 592.0L1466.8 600.5M1471.1 600.5L1480.1 592.0M1484.4 592.0L1493.4 600.5M1497.7 600.5L1506.7 592.0M1511.0 592.0L1520.0 600.5M1524.3 600.5L1533.3 592.0M1537.6 592.0L1546.6 600.5M1550.9 600.5L1559.9 592.0M1564.2 592.0L1573.2 600.5M1577.5 600.5L1586.5 592.0M1590.8 592.0L1599.8 600.5M1604.1 600.5L1613.1 592.0M1617.4 592.0L1626.4 600.5M1630.7 600.5L1639.7 592.0M1644.0 592.0L1653.0 600.5M1657.3 600.5L1666.3 592.0M1670.6 592.0L1679.6 600.5M1683.9 600.5L1692.9 592.0M1697.2 592.0L1706.2 600.5M1710.5 600.5L1719.5 592.0M1723.8 592.0L1732.8 600.5M1737.1 600.5L1746.1 592.0M1750.4 592.0L1759.4 600.5M1763.7 600.5L1772.7 592.0M1777.0 592.0L1786.0 600.5M1790.3 600.5L1799.3 592.0M1803.6 592.0L1812.6 600.5M1816.9 600.5L1825.9 592.0M1830.2 592.0L1839.2 600.5M1843.5 600.5L1852.5 592.0M1856.8 592.0L1865.8 600.5M1870.1 600.5L1879.1 592.0"/>
<path d="M1045.5 920.2L1055.3 911.0M1058.8 911.0L1068.6 920.2M1072.1 920.2L1081.9 911.0M1085.4 911.0L1095.2 920.2M1098.7 920.2L1108.5 911.0M1112.0 911.0L1121.8 920.2M1125.3 920.2L1135.1 911.0M1138.6 911.0L1148.4 920.2M1151.9 920.2L1161.7 911.0M1165.2 911.0L1175.0 920.2M1178.5 920.2L1188.3 911.0M1191.8 911.0L1201.6 920.2M1205.1 920.2L1214.9 911.0M1218.4 911.0L1228.2 920.2M1231.7 920.2L1241.5 911.0M1245.0 911.0L1254.8 920.2M1258.3 920.2L1268.1 911.0M1271.6 911.0L1281.4 920.2M1284.9 920.2L1294.7 911.0M1298.2 911.0L1308.0 920.2M1311.5 920.2L1321.3 911.0M1324.8 911.0L1334.6 920.2M1338.1 920.2L1347.9 911.0M1351.4 911.0L1361.2 920.2M1364.7 920.2L1374.5 911.0M1378.0 911.0L1387.8 920.2M1391.3 920.2L1401.1 911.0M1404.6 911.0L1414.4 920.2M1417.9 920.2L1427.7 911.0M1431.2 911.0L1441.0 920.2M1444.5 920.2L1454.3 911.0M1457.8 911.0L1467.6 920.2M1471.1 920.2L1480.9 911.0M1484.4 911.0L1494.2 920.2M1497.7 920.2L1507.5 911.0M1511.0 911.0L1520.8 920.2M1524.3 920.2L1534.1 911.0M1537.6 911.0L1547.4 920.2M1550.9 920.2L1560.7 911.0M1564.2 911.0L1574.0 920.2M1577.5 920.2L1587.3 911.0M1590.8 911.0L1600.6 920.2M1604.1 920.2L1613.9 911.0M1617.4 911.0L1627.2 920.2M1630.7 920.2L1640.5 911.0M1644.0 911.0L1653.8 920.2M1657.3 920.2L1667.1 911.0M1670.6 911.0L1680.4 920.2M1683.9 920.2L1693.7 911.0M1697.2 911.0L1707.0 920.2M1710.5 920.2L1720.3 911.0M1723.8 911.0L1733.6 920.2M1737.1 920.2L1746.9 911.0M1750.4 911.0L1760.2 920.2M1763.7 920.2L1773.5 911.0M1777.0 911.0L1786.8 920.2M1790.3 920.2L1800.1 911.0M1803.6 911.0L1813.4 920.2M1816.9 920.2L1826.7 911.0M1830.2 911.0L1840.0 920.2M1843.5 920.2L1853.3 911.0M1856.8 911.0L1866.6 920.2M1870.1 920.2L1879.9 911.0"/>
<path d="M1045.6 601.0L1045.5 601.1M1045.5 605.5L1054.5 614.4M1054.5 618.8L1045.5 627.7M1045.5 632.1L1054.5 641.0M1054.5 645.4L1045.5 654.3M1045.5 658.7L1054.5 667.6M1054.5 672.0L1045.5 680.9M1045.5 685.3L1054.5 694.2M1054.5 698.6L1045.5 707.5M1045.5 711.9L1054.5 720.8M1054.5 725.2L1045.5 734.1M1045.5 738.5L1054.5 747.4M1054.5 751.8L1045.5 760.7M1045.5 765.1L1054.5 774.0M1054.5 778.4L1045.5 787.3M1045.5 791.7L1054.5 800.6M1054.5 805.0L1045.5 813.9M1045.5 818.3L1054.5 827.2M1054.5 831.6L1045.5 840.5M1045.5 844.9L1054.5 853.8M1054.5 858.2L1045.5 867.1M1045.5 871.5L1054.5 880.4M1054.5 884.8L1045.5 893.7M1045.5 898.1L1054.5 907.0"/>
<path d="M1873.2 605.5L1881.2 613.4M1881.2 618.8L1873.2 626.7M1873.2 632.1L1881.2 640.0M1881.2 645.4L1873.2 653.3M1873.2 658.7L1881.2 666.6M1881.2 672.0L1873.2 679.9M1873.2 685.3L1881.2 693.2M1881.2 698.6L1873.2 706.5M1873.2 711.9L1881.2 719.8M1881.2 725.2L1873.2 733.1M1873.2 738.5L1881.2 746.4M1881.2 751.8L1873.2 759.7M1873.2 765.1L1881.2 773.0M1881.2 778.4L1873.2 786.3M1873.2 791.7L1881.2 799.6M1881.2 805.0L1873.2 812.9M1873.2 818.3L1881.2 826.2M1881.2 831.6L1873.2 839.5M1873.2 844.9L1881.2 852.8M1881.2 858.2L1873.2 866.1M1873.2 871.5L1881.2 879.4M1881.2 884.8L1873.2 892.7M1873.2 898.1L1881.2 906.0"/>
<path d="M1058.8 639.0L1067.3 631.0M1072.1 631.0L1080.6 639.0M1085.4 639.0L1093.9 631.0M1098.7 631.0L1107.2 639.0M1112.0 639.0L1120.5 631.0M1125.3 631.0L1133.8 639.0M1138.6 639.0L1147.1 631.0M1151.9 631.0L1160.4 639.0M1165.2 639.0L1173.7 631.0M1178.5 631.0L1187.0 639.0M1191.8 639.0L1200.3 631.0M1205.1 631.0L1213.6 639.0M1218.4 639.0L1226.9 631.0M1231.7 631.0L1240.2 639.0M1245.0 639.0L1253.5 631.0M1258.3 631.0L1266.8 639.0M1271.6 639.0L1280.1 631.0M1284.9 631.0L1293.4 639.0M1298.2 639.0L1306.7 631.0M1311.5 631.0L1320.0 639.0M1324.8 639.0L1333.3 631.0M1338.1 631.0L1346.6 639.0M1351.4 639.0L1359.9 631.0M1364.7 631.0L1373.2 639.0M1378.0 639.0L1386.5 631.0M1391.3 631.0L1399.8 639.0M1404.6 639.0L1413.1 631.0M1417.9 631.0L1426.4 639.0M1431.2 639.0L1439.7 631.0M1444.5 631.0L1453.0 639.0M1457.8 639.0L1466.3 631.0M1471.1 631.0L1479.6 639.0M1484.4 639.0L1492.9 631.0M1497.7 631.0L1506.2 639.0M1511.0 639.0L1519.5 631.0M1524.3 631.0L1532.8 639.0M1537.6 639.0L1546.1 631.0M1550.9 631.0L1559.4 639.0M1564.2 639.0L1572.7 631.0M1577.5 631.0L1586.0 639.0M1590.8 639.0L1599.3 631.0M1604.1 631.0L1612.6 639.0M1617.4 639.0L1625.9 631.0M1630.7 631.0L1639.2 639.0M1644.0 639.0L1652.5 631.0M1657.3 631.0L1665.8 639.0M1670.6 639.0L1679.1 631.0M1683.9 631.0L1692.4 639.0M1697.2 639.0L1705.7 631.0M1710.5 631.0L1719.0 639.0M1723.8 639.0L1732.3 631.0M1737.1 631.0L1745.6 639.0M1750.4 639.0L1758.9 631.0M1763.7 631.0L1772.2 639.0M1777.0 639.0L1785.5 631.0M1790.3 631.0L1798.8 639.0M1803.6 639.0L1812.1 631.0M1816.9 631.0L1825.4 639.0M1830.2 639.0L1838.7 631.0M1843.5 631.0L1852.0 639.0M1856.8 639.0L1865.3 631.0M1870.1 631.0L1873.0 633.7"/>
</g>
<rect x="201.3" y="45.5" width="1102" height="175.5" rx="7" fill="#04070f" stroke="#1d2735"/>
<rect x="1338.4" y="45.5" width="534.4" height="176" rx="7" fill="#04070f" stroke="#1d2735"/>
</svg>
<div class="t" style="left:195.2px;top:10.5px;font-size:8px;color:#4c44c2;font-weight:400;">Last MTD Rev</div>
<div class="t" style="left:252.4px;top:12.2px;font-size:10.3px;color:#f2f2f6;font-weight:700;letter-spacing:-0.35px">$10686.97</div>
<div class="t" style="left:310.0px;top:10.5px;font-size:8px;color:#4c44c2;font-weight:400;">MTD Rev</div>
<div class="t" style="left:348.9px;top:12.2px;font-size:10.3px;color:#f2f2f6;font-weight:700;letter-spacing:-0.35px">$2023.67</div>
<div class="t" style="left:397.1px;top:11.4px;font-size:7px;color:#d8423b;font-weight:400;">-8663.30$</div>
<div class="t" style="left:443.4px;top:10.5px;font-size:8px;color:#4c44c2;font-weight:400;">YST Rev</div>
<div class="t" style="left:479.2px;top:12.2px;font-size:10.3px;color:#f2f2f6;font-weight:700;letter-spacing:-0.35px">$249.80</div>
<div class="t" style="left:528.0px;top:10.5px;font-size:8px;color:#4c44c2;font-weight:400;">TDY Rev</div>
<div class="t" style="left:564.8px;top:12.2px;font-size:10.3px;color:#f2f2f6;font-weight:700;letter-spacing:-0.35px">$120.93</div>
<div class="t" style="left:605.4px;top:11.4px;font-size:7px;color:#d8423b;font-weight:400;">-128.87$</div>
<div class="t" style="left:644.5px;top:10.5px;font-size:8px;color:#4c44c2;font-weight:400;">Last MTD Leads</div>
<div class="t" style="left:710.5px;top:12.2px;font-size:10.3px;color:#f2f2f6;font-weight:700;letter-spacing:-0.35px">351</div>
<div class="t" style="left:737.1px;top:10.5px;font-size:8px;color:#4c44c2;font-weight:400;">MTD Leads</div>
<div class="t" style="left:785.0px;top:12.2px;font-size:10.3px;color:#f2f2f6;font-weight:700;letter-spacing:-0.35px">72</div>
<div class="t" style="left:801.5px;top:11.4px;font-size:7px;color:#d8423b;font-weight:400;">-279</div>
<div class="t" style="left:827.6px;top:10.5px;font-size:8px;color:#4c44c2;font-weight:400;">MTD avg</div>
<div class="t" style="left:867.0px;top:12.2px;font-size:10.3px;color:#f2f2f6;font-weight:700;letter-spacing:-0.35px">$10455.63</div>
<div class="a" style="left:303.9px;top:10px;width:1px;height:15px;background:#222b3a"></div>
<div class="a" style="left:436.8px;top:10px;width:1px;height:15px;background:#222b3a"></div>
<div class="a" style="left:521.1px;top:10px;width:1px;height:15px;background:#222b3a"></div>
<div class="a" style="left:637.9px;top:10px;width:1px;height:15px;background:#222b3a"></div>
<div class="a" style="left:731.2px;top:10px;width:1px;height:15px;background:#222b3a"></div>
<div class="a" style="left:821.1px;top:10px;width:1px;height:15px;background:#222b3a"></div>
<div class="a" style="left:1679px;top:4px;width:26.5px;height:26.5px;border-radius:50%;background:#1f2736"></div>
<div class="a" style="left:1716px;top:4px;width:26.5px;height:26.5px;border-radius:50%;background:#1f2736"></div>
<svg class="a" style="left:1686.5px;top:13.5px" width="11" height="8.5" viewBox="0 0 11 8.5"><rect x="1.2" y="0.6" width="5.4" height="7.3" rx="1.3" fill="none" stroke="#d8dbe2" stroke-width="1.1"/><rect x="6.6" y="0.6" width="3.8" height="7.3" rx="1.3" fill="none" stroke="#d8dbe2" stroke-width="1.1"/><path d="M0.3 2.5h1.4M0.3 6h1.4" stroke="#d8dbe2" stroke-width="0.9"/></svg>
<svg class="a" style="left:1724px;top:13px" width="11" height="10" viewBox="0 0 11 10"><path d="M1 2.5h2.3a1.7 1.7 0 1 1 3.4 0H9v2.3a1.6 1.6 0 1 1 0 3.2V9.5H6.5a1.6 1.6 0 1 0-3 0H1V7.2a1.6 1.6 0 1 0 0-3.2z" fill="#f4f4f8"/></svg>
<div class="a" style="left:1759.6px;top:4.4px;width:82px;height:26.4px;border-radius:3px;background:#0a0a0c;border:1px solid #262a30"></div>
<svg class="a" style="left:1769.5px;top:11.5px" width="11" height="11" viewBox="0 0 11 11"><path d="M10.2 0.8L6.8 4.2M4.6 2.8l3.6 3.6-4.3 4.2-3.6-3.6z" fill="none" stroke="#e8e8ec" stroke-width="1.1" stroke-linejoin="round"/><path d="M2 7.4l2.1 2.1M3.3 6.1l2.1 2.1" stroke="#e8e8ec" stroke-width="0.8"/></svg>
<div class="t" style="left:1786.4px;top:12.9px;font-size:9px;color:#ececf0;font-weight:700;letter-spacing:-0.25px">Customize</div>
<div class="a" style="left:1852px;top:3.5px;width:27.5px;height:27.5px;border-radius:50%;background:radial-gradient(circle at 40% 40%,#ffffff,#d6d6d6 70%,#bdbdbd)"></div>
<svg class="a" style="left:1855px;top:10px" width="22" height="14" viewBox="0 0 22 14"><path d="M3.5 1.5h8L3 10.5h10" fill="none" stroke="#3a3a3a" stroke-width="1.5"/><path d="M5.5 6.5h4" stroke="#3a3a3a" stroke-width="1.2"/><path d="M12 10.5l2.5-8 3 4.5 3-5.5v10" fill="none" stroke="#3a3a3a" stroke-width="1.4"/></svg>
<div class="a" style="left:1852px;top:23px;width:8px;height:8px;border-radius:50%;background:#22c55e"></div>
<svg class="a" style="left:15px;top:0" width="120" height="36" viewBox="0 0 120 36">
<defs><linearGradient id="og" x1="0" y1="0" x2="1" y2="1"><stop offset="0" stop-color="#ffb020"/><stop offset="1" stop-color="#f05a10"/></linearGradient></defs>
<path d="M15 9.5L7.5 16.8L15 24" fill="none" stroke="url(#og)" stroke-width="3.6" stroke-linecap="round" stroke-linejoin="round"/>
<path d="M24.3 3.5L14 31" fill="none" stroke="url(#og)" stroke-width="3" stroke-linecap="round"/>
<path d="M103 8L111.5 16.5L103.5 24.5" fill="none" stroke="url(#og)" stroke-width="3.4" stroke-linecap="round" stroke-linejoin="round"/>
<path d="M30 9.5Q62 -2 99 7" fill="none" stroke="#e8e8e8" stroke-width="1"/>
<path d="M28.5 8.5l2.5 -1.2 -0.8 2.5z" fill="#e8e8e8"/>
</svg>
<div class="t" style="left:38.5px;top:11.3px;font-size:11px;color:#f4f4f4;font-weight:700;letter-spacing:1.2px;transform:scaleX(1.2);transform-origin:0 0">e-MATREX</div>
<div class="a" style="left:140.5px;top:7.3px;width:21px;height:21px;border-radius:50%;background:#03060e;border:1px solid #1e2a38"></div>
<svg class="a" style="left:146px;top:12px" width="10" height="11" viewBox="0 0 10 11"><path d="M2.2 8V4.8a2.8 2.8 0 0 1 5.6 0V8M1 8.3h8M4.2 10h1.6" fill="none" stroke="#e6e6ea" stroke-width="1.1"/></svg>
<div class="a" style="left:170.2px;top:10.2px;width:15.5px;height:15.5px;border-radius:50%;background:#03060e;border:1px solid #1e2a38"></div>
<svg class="a" style="left:174px;top:14px" width="8" height="8" viewBox="0 0 8 8"><path d="M5.3 1.3L2.6 4l2.7 2.7" fill="none" stroke="#d0d0d6" stroke-width="1.1"/></svg>
<div class="a" style="left:0;top:43px;width:178px;height:27px;background:#1e2533"></div>
<div class="a" style="left:103px;top:44px;width:38px;height:24px;background:#03060e;border-bottom:2px solid #4a40be"></div>
<svg class="a" style="left:41px;top:47px" width="14" height="14" viewBox="0 0 14 14"><g fill="none" stroke="#9da1ab" stroke-width="1.3"><rect x="0.7" y="0.7" width="5" height="6.6" rx="1"/><rect x="8.3" y="0.7" width="5" height="4" rx="1"/><rect x="0.7" y="9.3" width="5" height="4" rx="1"/><rect x="8.3" y="6.7" width="5" height="6.6" rx="1"/></g></svg>
<svg class="a" style="left:78px;top:46px" width="14" height="16" viewBox="0 0 14 16"><g fill="none" stroke="#9da1ab" stroke-width="1.3"><path d="M3.2 11.2A5.8 5.8 0 1 1 10.8 11.2"/><path d="M4.9 8.9A3.2 3.2 0 1 1 9.1 8.9"/></g><circle cx="7" cy="6.6" r="1.3" fill="#9da1ab"/><rect x="6.1" y="9" width="1.8" height="6.5" rx="0.9" fill="#9da1ab"/></svg>
<svg class="a" style="left:114.5px;top:46.5px" width="15" height="15" viewBox="0 0 15 15"><g fill="none" stroke="#4a40be" stroke-width="1.3"><circle cx="7.5" cy="7.5" r="6.6"/><circle cx="7.5" cy="7.5" r="3.2"/><path d="M7.5 0.9v3.4M10.7 7.5h3.4"/></g></svg>
<div class="a" style="left:3px;top:86px;width:164px;height:24px;background:#4a40be"></div>
<div class="t" style="left:26.8px;top:92.7px;font-size:9.8px;color:#eceef4;font-weight:700;letter-spacing:-0.45px">Dashboard</div>
<div class="t" style="left:26.8px;top:122.0px;font-size:9.8px;color:#eceef4;font-weight:700;letter-spacing:-0.45px">Mailer Report</div>
<div class="t" style="left:26.8px;top:151.2px;font-size:9.8px;color:#eceef4;font-weight:700;letter-spacing:-0.45px">Offers</div>
<div class="t" style="left:26.8px;top:180.4px;font-size:9.8px;color:#eceef4;font-weight:700;letter-spacing:-0.45px">Campaign</div>
<div class="t" style="left:26.8px;top:210.0px;font-size:9.8px;color:#eceef4;font-weight:700;letter-spacing:-0.45px">Conversions</div>
<div class="t" style="left:26.8px;top:238.8px;font-size:9.8px;color:#eceef4;font-weight:700;letter-spacing:-0.45px">Datalist</div>
<svg class="a" style="left:11px;top:92px" width="10" height="10" viewBox="0 0 10 10"><path d="M1 8A4 4 0 0 1 9 6M5 7.5l2.5-4" fill="none" stroke="#fff" stroke-width="1.1"/></svg>
<svg class="a" style="left:11px;top:122px" width="10" height="10" viewBox="0 0 10 10"><path d="M1.5 8A3.8 3.8 0 1 1 8.5 8M4 5l2 2.5" fill="none" stroke="#d6d8de" stroke-width="1.1"/></svg>
<svg class="a" style="left:11px;top:151px" width="10" height="10" viewBox="0 0 10 10"><circle cx="5" cy="5" r="4.3" fill="#d6d8de"/><path d="M3.3 6.7l3.4-3.4" stroke="#0e1320" stroke-width="1"/></svg>
<svg class="a" style="left:11px;top:180px" width="10" height="11" viewBox="0 0 10 11"><g fill="none" stroke="#d6d8de" stroke-width="1"><ellipse cx="4.5" cy="2.3" rx="3.5" ry="1.5"/><path d="M1 2.3v6.5c0 .8 1.6 1.5 3.5 1.5M8 2.3v3M1 5.5c0 .8 1.6 1.5 3.5 1.5"/><rect x="5.5" y="7" width="3.5" height="3"/></g></svg>
<svg class="a" style="left:11px;top:209px" width="10" height="11" viewBox="0 0 10 11"><path d="M6 1H1.5v9H5M6 1l2.5 2.5V5M8.5 7.5v2.5H7" fill="none" stroke="#d6d8de" stroke-width="1.1"/></svg>
<svg class="a" style="left:11px;top:238px" width="10" height="10" viewBox="0 0 10 10"><path d="M1 9l2.5-2 2 1L9 2" fill="none" stroke="#d6d8de" stroke-width="1.1"/><circle cx="9" cy="2" r="1" fill="#d6d8de"/></svg>
<div class="a" style="left:207.0px;top:52.3px;width:213px;height:78.5px;border:1px solid #1d2735;border-radius:7px;background:#04070f"></div>
<div class="t" style="left:219.3px;top:74.7px;font-size:12px;color:#f0f2f8;font-weight:400;-webkit-text-stroke:0.2px #f0f2f8">Finished Campaigns</div>
<svg class="a" style="left:220.0px;top:95.8px" width="14" height="11" viewBox="0 0 14 11"><rect x="1" y="3.6" width="5" height="3.2" rx="1" fill="none" stroke="#36608a" stroke-width="1.3"/><path d="M6 3.3L8.7 1.3v8L6 7.1z" fill="#36608a"/><rect x="2" y="6.8" width="1.6" height="3.4" fill="#36608a"/><path d="M10.4 2.3l1.6-1.4M10.4 8.2l1.6 1.4" stroke="#36608a" stroke-width="1.2"/><rect x="11" y="4.4" width="2.4" height="1.6" fill="#36608a"/></svg>
<div class="t" style="left:245.5px;top:95.7px;font-size:11.3px;color:#ffffff;font-weight:700;letter-spacing:0.3px">35</div>
<div class="a" style="left:426.4px;top:52.3px;width:213px;height:78.5px;border:1px solid #1d2735;border-radius:7px;background:#04070f"></div>
<div class="t" style="left:438.75px;top:74.7px;font-size:12px;color:#f0f2f8;font-weight:400;-webkit-text-stroke:0.2px #f0f2f8">Sent</div>
<svg class="a" style="left:438.9px;top:95.8px" width="16" height="14" viewBox="0 0 16 14"><rect x="0.6" y="0.6" width="13" height="9.5" fill="none" stroke="#36608a" stroke-width="1.1"/><path d="M0.8 1l6.3 5 6.3-5" fill="none" stroke="#36608a" stroke-width="1.1"/></svg>
<div class="t" style="left:464.95px;top:95.7px;font-size:11.3px;color:#ffffff;font-weight:700;letter-spacing:0.3px">2 200 192</div>
<div class="a" style="left:645.9px;top:52.3px;width:213px;height:78.5px;border:1px solid #1d2735;border-radius:7px;background:#04070f"></div>
<div class="t" style="left:658.1999999999999px;top:74.7px;font-size:12px;color:#f0f2f8;font-weight:400;-webkit-text-stroke:0.2px #f0f2f8">Delivered</div>
<svg class="a" style="left:658.4px;top:95.8px" width="16" height="14" viewBox="0 0 16 14"><rect x="0.6" y="0.6" width="13" height="9.5" fill="none" stroke="#36608a" stroke-width="1.1"/><path d="M0.8 1l6.3 5 6.3-5" fill="none" stroke="#36608a" stroke-width="1.1"/><path d="M9 10.5l1.5 1.5 3-3" fill="none" stroke="#36608a" stroke-width="1.1"/></svg>
<div class="t" style="left:684.4px;top:95.7px;font-size:11.3px;color:#ffffff;font-weight:700;letter-spacing:0.3px">1 301 795</div>
<div class="a" style="left:865.3px;top:52.3px;width:213px;height:78.5px;border:1px solid #1d2735;border-radius:7px;background:#04070f"></div>
<div class="t" style="left:877.6499999999999px;top:74.7px;font-size:12px;color:#f0f2f8;font-weight:400;-webkit-text-stroke:0.2px #f0f2f8">Soft Bounced</div>
<svg class="a" style="left:877.8px;top:95.8px" width="16" height="14" viewBox="0 0 16 14"><rect x="0.6" y="0.6" width="13" height="9.5" fill="none" stroke="#36608a" stroke-width="1.1"/><path d="M0.8 1l6.3 5 6.3-5" fill="none" stroke="#36608a" stroke-width="1.1"/><circle cx="12" cy="10" r="3.4" fill="#04070f" stroke="#36608a" stroke-width="1.1"/><path d="M12 8.3v2M12 11.2v.6" stroke="#36608a" stroke-width="1"/></svg>
<div class="t" style="left:903.8499999999999px;top:95.7px;font-size:11.3px;color:#ffffff;font-weight:700;letter-spacing:0.3px">315 387</div>
<div class="a" style="left:1084.8px;top:52.3px;width:213px;height:78.5px;border:1px solid #1d2735;border-radius:7px;background:#04070f"></div>
<div class="t" style="left:1097.1px;top:74.7px;font-size:12px;color:#f0f2f8;font-weight:400;-webkit-text-stroke:0.2px #f0f2f8">Hard Bounced</div>
<svg class="a" style="left:1097.3px;top:95.8px" width="16" height="14" viewBox="0 0 16 14"><rect x="0.6" y="0.6" width="13" height="9.5" fill="none" stroke="#36608a" stroke-width="1.1"/><path d="M0.8 1l6.3 5 6.3-5" fill="none" stroke="#36608a" stroke-width="1.1"/><circle cx="12" cy="10" r="2.5" fill="#36608a"/></svg>
<div class="t" style="left:1123.3px;top:95.7px;font-size:11.3px;color:#ffffff;font-weight:700;letter-spacing:0.3px">17</div>
<div class="a" style="left:207.0px;top:136.4px;width:213px;height:78.5px;border:1px solid #1d2735;border-radius:7px;background:#04070f"></div>
<div class="t" style="left:219.3px;top:158.8px;font-size:12px;color:#f0f2f8;font-weight:400;-webkit-text-stroke:0.2px #f0f2f8">Opens</div>
<svg class="a" style="left:219.5px;top:179.9px" width="14" height="14" viewBox="0 0 14 14"><path d="M0.8 5L7 0.8 13.2 5v8H0.8z" fill="none" stroke="#36608a" stroke-width="1.1"/><path d="M4 6.5l3 2 3-2" fill="none" stroke="#36608a" stroke-width="1.1"/></svg>
<div class="t" style="left:245.5px;top:179.8px;font-size:11.3px;color:#ffffff;font-weight:700;letter-spacing:0.3px">27 236</div>
<div class="a" style="left:426.4px;top:136.4px;width:213px;height:78.5px;border:1px solid #1d2735;border-radius:7px;background:#04070f"></div>
<div class="t" style="left:438.75px;top:158.8px;font-size:12px;color:#f0f2f8;font-weight:400;-webkit-text-stroke:0.2px #f0f2f8">Clicks</div>
<svg class="a" style="left:438.4px;top:180.20000000000002px" width="14" height="15" viewBox="0 0 14 15"><path d="M4.6 9V3a1.1 1.1 0 0 1 2.2 0v5.2M6.8 6.6a1 1 0 0 1 2 0v1.4M8.8 7a1 1 0 0 1 2 0v1M10.8 7.6a1 1 0 0 1 1.8.3V11a3.6 3.6 0 0 1-3.6 3.5H7A3.3 3.3 0 0 1 4 12.6L1.8 9.6a1 1 0 0 1 1.5-1.2L4.6 9.6" fill="none" stroke="#36608a" stroke-width="1.1"/><path d="M1.7 1.5l1.3.6M0.6 4.3h1.4M8.4 1.9l1.2-.5" stroke="#36608a" stroke-width="1.1"/></svg>
<div class="t" style="left:464.95px;top:179.8px;font-size:11.3px;color:#ffffff;font-weight:700;letter-spacing:0.3px">2 944</div>
<div class="a" style="left:645.9px;top:136.4px;width:213px;height:78.5px;border:1px solid #1d2735;border-radius:7px;background:#04070f"></div>
<div class="t" style="left:658.1999999999999px;top:158.8px;font-size:12px;color:#f0f2f8;font-weight:400;-webkit-text-stroke:0.2px #f0f2f8">Unsubs</div>
<svg class="a" style="left:658.4px;top:179.9px" width="16" height="14" viewBox="0 0 16 14"><rect x="0.6" y="0.6" width="13" height="9.5" fill="none" stroke="#36608a" stroke-width="1.1"/><path d="M0.8 1l6.3 5 6.3-5" fill="none" stroke="#36608a" stroke-width="1.1"/><circle cx="12" cy="10" r="2.8" fill="#36608a"/></svg>
<div class="t" style="left:684.4px;top:179.8px;font-size:11.3px;color:#ffffff;font-weight:700;letter-spacing:0.3px">105</div>
<div class="a" style="left:865.3px;top:136.4px;width:213px;height:78.5px;border:1px solid #1d2735;border-radius:7px;background:#04070f"></div>
<div class="t" style="left:877.6499999999999px;top:158.8px;font-size:12px;color:#f0f2f8;font-weight:400;-webkit-text-stroke:0.2px #f0f2f8">Servers</div>
<svg class="a" style="left:877.8px;top:179.9px" width="14" height="13" viewBox="0 0 14 13"><rect x="0.6" y="0.6" width="12.8" height="5" rx="1" fill="none" stroke="#3a5fa0" stroke-width="1.2"/><rect x="0.6" y="7.4" width="12.8" height="5" rx="1" fill="none" stroke="#3a5fa0" stroke-width="1.2"/><path d="M3 3.1h2M3 9.9h2" stroke="#3a5fa0" stroke-width="1.1"/></svg>
<div class="t" style="left:903.8499999999999px;top:179.8px;font-size:11.3px;color:#ffffff;font-weight:700;letter-spacing:0.3px">241</div>
<div class="a" style="left:1084.8px;top:136.4px;width:213px;height:78.5px;border:1px solid #1d2735;border-radius:7px;background:#04070f"></div>
<div class="t" style="left:1097.1px;top:158.8px;font-size:12px;color:#f0f2f8;font-weight:400;-webkit-text-stroke:0.2px #f0f2f8">Ips</div>
<svg class="a" style="left:1097.3px;top:179.9px" width="14" height="14" viewBox="0 0 14 14"><path d="M1 13V6a6 6 0 0 1 12 0v7z" fill="none" stroke="#36608a" stroke-width="1.1"/><path d="M7 0.5v6M1.5 4h11M1 6.5h12M3.5 2v4.5M10.5 2v4.5" stroke="#36608a" stroke-width="0.9"/><rect x="2.5" y="7.8" width="9" height="4.5" fill="none" stroke="#36608a" stroke-width="0.9"/><path d="M5 8.8v2.7M7.5 8.8v2.7M7.5 8.8h1.5v1.3H7.5" stroke="#36608a" stroke-width="0.9" fill="none"/></svg>
<div class="t" style="left:1123.3px;top:179.8px;font-size:11.3px;color:#ffffff;font-weight:700;letter-spacing:0.3px">273</div>
<div class="a" style="left:1417.1px;top:46px;width:1px;height:175px;background:#1d2735"></div>
<div class="a" style="left:1415.6px;top:52px;width:1.6px;height:26px;background:#4a40be"></div>
<div class="a" style="left:1344px;top:51.5px;width:22px;height:22px;border-radius:50%;background:#4a40be"></div>
<div class="t" style="left:1371.5px;top:55.0px;font-size:11px;color:#f0f2f8;font-weight:400;-webkit-text-stroke:0.2px #f0f2f8">Memory</div>
<div class="a" style="left:1344px;top:88.6px;width:22px;height:22px;border-radius:50%;background:#1f2733"></div>
<div class="t" style="left:1371.5px;top:92.7px;font-size:11px;color:#f0f2f8;font-weight:400;-webkit-text-stroke:0.2px #f0f2f8">Storage</div>
<div class="a" style="left:1344px;top:125.9px;width:22px;height:22px;border-radius:50%;background:#1f2733"></div>
<div class="t" style="left:1371.5px;top:130.0px;font-size:11px;color:#f0f2f8;font-weight:400;-webkit-text-stroke:0.2px #f0f2f8">Cpu</div>
<svg class="a" style="left:1348px;top:58px" width="14" height="9" viewBox="0 0 14 9"><rect x="0.5" y="0.5" width="13" height="5" fill="#1f2a44"/><path d="M4 1.5v3M7 1.5v3M10 1.5v3" stroke="#6a62d8" stroke-width="1"/><rect x="0.5" y="6.8" width="13" height="1.6" fill="#1f2a44"/></svg>
<svg class="a" style="left:1351px;top:95px" width="9" height="10" viewBox="0 0 9 10"><path d="M3 0.5h5.5v9H0.5V3z" fill="#f2f2f6"/></svg>
<svg class="a" style="left:1350px;top:131.5px" width="11" height="11" viewBox="0 0 11 11"><rect x="1" y="1" width="9" height="9" rx="2" fill="none" stroke="#d8dae0" stroke-width="1.1"/><rect x="3.3" y="3.3" width="4.4" height="4.4" fill="#d8dae0"/></svg>
<svg class="a" style="left:0;top:0" width="1890" height="914" viewBox="0 0 1890 914">
<path d="M1657.70 57.15A77.0 77.0 0 1 1 1575.59 106.49L1595.25 116.94A55.0 55.0 0 1 0 1657.70 79.42Z" fill="#ffffff" stroke="#ffffff" stroke-width="21.2" stroke-linejoin="round"/>
<path d="M1584.98 88.83A77.0 77.0 0 0 1 1637.70 57.15L1637.70 79.42A55.0 55.0 0 0 0 1604.64 99.28Z" fill="#ffffff" stroke="#ffffff" stroke-width="21.2" stroke-linejoin="round"/>
<path d="M1657.70 57.15A77.0 77.0 0 1 1 1575.59 106.49L1595.25 116.94A55.0 55.0 0 1 0 1657.70 79.42Z" fill="#5850c2" stroke="#5850c2" stroke-width="16.0" stroke-linejoin="round"/>
<path d="M1584.98 88.83A77.0 77.0 0 0 1 1637.70 57.15L1637.70 79.42A55.0 55.0 0 0 0 1604.64 99.28Z" fill="#f77a1b" stroke="#f77a1b" stroke-width="16.0" stroke-linejoin="round"/>
</svg>
<div class="a" style="left:201px;top:256px;width:759px;height:29px;border:1px solid #1d2735;background:#04070f"></div>
<div class="a" style="left:965px;top:256px;width:55px;height:27px;border:1px solid #1d2735;background:#04070f"></div>
<svg class="a" style="left:978.0px;top:265.3px" width="8" height="9" viewBox="0 0 8 9"><path d="M0.7 0.9h6.6L4.6 4.2v3.6L3.4 7V4.2z" fill="none" stroke="#f2f2f6" stroke-width="0.9" stroke-linejoin="round"/></svg>
<div class="t" style="left:986.0px;top:264.5px;font-size:8.6px;color:#f4f4f8;font-weight:700;letter-spacing:-0.2px">Filter</div>
<div class="t" style="left:229.2px;top:262.1px;font-size:13px;color:#f2f4f8;font-weight:400;"><span style="color:#5148cc">Countries</span> <span style="-webkit-text-stroke:0.35px #f2f4f8">Conversion Statistics</span></div>
<svg class="a" style="left:208.2px;top:263.2px" width="14" height="14" viewBox="0 0 14 14"><rect x="0.6" y="0.6" width="12.8" height="12.8" rx="2.5" fill="none" stroke="#221e60" stroke-width="1.1"/><circle cx="4" cy="6.5" r="1.1" fill="none" stroke="#4a42b8" stroke-width="0.8"/><circle cx="7.5" cy="2.8" r="1.1" fill="none" stroke="#4a42b8" stroke-width="0.8"/><circle cx="11" cy="4.5" r="1.1" fill="none" stroke="#4a42b8" stroke-width="0.8"/><path d="M4.5 5.5l2.4-2M8.5 3.3l1.5 1M3 8.5l-1 3 3-1" fill="none" stroke="#3a33a0" stroke-width="0.8"/></svg>
<div class="a" style="left:852px;top:256px;width:1px;height:29px;background:#1d2735"></div>
<div class="a" style="left:879px;top:256px;width:1px;height:29px;background:#1d2735"></div>
<div class="a" style="left:905px;top:256px;width:1px;height:29px;background:#1d2735"></div>
<div class="a" style="left:931px;top:256px;width:1px;height:29px;background:#1d2735"></div>
<svg class="a" style="left:862.0px;top:266.7px" width="8" height="8" viewBox="0 0 8 8"><path d="M0.8 0.6h6.4M0.8 7.3h6.4" stroke="#c8cad2" stroke-width="0.9"/><rect x="0.8" y="2.9" width="6.4" height="2" rx="1" fill="none" stroke="#c8cad2" stroke-width="0.9"/><path d="M2.5 3.9h.6M3.7 3.9h.6M4.9 3.9h.6" stroke="#c8cad2" stroke-width="0.8"/></svg>
<svg class="a" style="left:891.0px;top:266.5px" width="3" height="8" viewBox="0 0 3 8"><circle cx="1.5" cy="1" r="0.9" fill="#c8cad2"/><circle cx="1.5" cy="4" r="0.9" fill="#c8cad2"/><circle cx="1.5" cy="7" r="0.9" fill="#c8cad2"/></svg>
<svg class="a" style="left:913.5px;top:265.7px" width="10" height="10" viewBox="0 0 10 10"><path d="M1 0.5v8.6h8.3M2 6.5l1.8-4 2 2.6L8.5 1" fill="none" stroke="#c8cad2" stroke-width="0.9"/></svg>
<div class="a" style="left:932px;top:257px;width:27px;height:27px;background:#4a40be"></div>
<svg class="a" style="left:941.5px;top:266.5px" width="8" height="8" viewBox="0 0 8 8"><path d="M1.5 3.2v4.8M4.5 1v7M7 5.2v2.8" stroke="#262a55" stroke-width="1.2"/></svg>
<div class="a" style="left:1054px;top:256px;width:759px;height:27px;border:1px solid #1d2735;background:#04070f"></div>
<div class="a" style="left:1818px;top:256px;width:55px;height:27px;border:1px solid #1d2735;background:#04070f"></div>
<svg class="a" style="left:1831.0px;top:265.3px" width="8" height="9" viewBox="0 0 8 9"><path d="M0.7 0.9h6.6L4.6 4.2v3.6L3.4 7V4.2z" fill="none" stroke="#f2f2f6" stroke-width="0.9" stroke-linejoin="round"/></svg>
<div class="t" style="left:1839.0px;top:264.5px;font-size:8.6px;color:#f4f4f8;font-weight:700;letter-spacing:-0.2px">Filter</div>
<div class="t" style="left:1087.3px;top:262.1px;font-size:13px;color:#f2f4f8;font-weight:400;"><span style="color:#5148cc">Country</span> <span style="-webkit-text-stroke:0.35px #f2f4f8">Revenue</span></div>
<svg class="a" style="left:1067px;top:261.5px" width="12" height="14" viewBox="0 0 12 14"><path d="M1.2 13.5V1.2h9L8 4.5l2.2 3.5H1.2" fill="none" stroke="#4b43c6" stroke-width="1.1"/></svg>
<div class="a" style="left:201px;top:600px;width:759px;height:29px;border:1px solid #1d2735;background:#04070f"></div>
<div class="a" style="left:965px;top:600px;width:55px;height:27px;border:1px solid #1d2735;background:#04070f"></div>
<svg class="a" style="left:978.0px;top:609.3px" width="8" height="9" viewBox="0 0 8 9"><path d="M0.7 0.9h6.6L4.6 4.2v3.6L3.4 7V4.2z" fill="none" stroke="#f2f2f6" stroke-width="0.9" stroke-linejoin="round"/></svg>
<div class="t" style="left:986.0px;top:608.5px;font-size:8.6px;color:#f4f4f8;font-weight:700;letter-spacing:-0.2px">Filter</div>
<div class="t" style="left:229.2px;top:606.1px;font-size:13px;color:#f2f4f8;font-weight:400;"><span style="color:#5148cc">Revenue</span> <span style="-webkit-text-stroke:0.35px #f2f4f8">Statistics</span></div>
<svg class="a" style="left:208px;top:606px" width="14" height="14" viewBox="0 0 14 14"><circle cx="7" cy="7" r="6.2" fill="none" stroke="#4b43c6" stroke-width="1.2"/><circle cx="7" cy="7" r="3.3" fill="#3e37b0"/><path d="M8.2 5.6c-.4-.5-2.4-.6-2.4.5s2.4.8 2.4 1.9-2 1-2.4.5M7 4.2v5.6" fill="none" stroke="#1a1650" stroke-width="0.8"/></svg>
<div class="a" style="left:852px;top:600px;width:1px;height:29px;background:#1d2735"></div>
<div class="a" style="left:879px;top:600px;width:1px;height:29px;background:#1d2735"></div>
<div class="a" style="left:905px;top:600px;width:1px;height:29px;background:#1d2735"></div>
<div class="a" style="left:931px;top:600px;width:1px;height:29px;background:#1d2735"></div>
<svg class="a" style="left:862.0px;top:610.7px" width="8" height="8" viewBox="0 0 8 8"><path d="M0.8 0.6h6.4M0.8 7.3h6.4" stroke="#c8cad2" stroke-width="0.9"/><rect x="0.8" y="2.9" width="6.4" height="2" rx="1" fill="none" stroke="#c8cad2" stroke-width="0.9"/><path d="M2.5 3.9h.6M3.7 3.9h.6M4.9 3.9h.6" stroke="#c8cad2" stroke-width="0.8"/></svg>
<svg class="a" style="left:891.0px;top:610.5px" width="3" height="8" viewBox="0 0 3 8"><circle cx="1.5" cy="1" r="0.9" fill="#c8cad2"/><circle cx="1.5" cy="4" r="0.9" fill="#c8cad2"/><circle cx="1.5" cy="7" r="0.9" fill="#c8cad2"/></svg>
<svg class="a" style="left:913.5px;top:609.7px" width="10" height="10" viewBox="0 0 10 10"><path d="M1 0.5v8.6h8.3M2 6.5l1.8-4 2 2.6L8.5 1" fill="none" stroke="#c8cad2" stroke-width="0.9"/></svg>
<div class="a" style="left:932px;top:601px;width:27px;height:27px;background:#4a40be"></div>
<svg class="a" style="left:941.5px;top:610.5px" width="8" height="8" viewBox="0 0 8 8"><path d="M1.5 3.2v4.8M4.5 1v7M7 5.2v2.8" stroke="#262a55" stroke-width="1.2"/></svg>
<div class="a" style="left:1054px;top:600px;width:759px;height:29px;border:1px solid #1d2735;background:#04070f"></div>
<div class="a" style="left:1818px;top:600px;width:55px;height:27px;border:1px solid #1d2735;background:#04070f"></div>
<svg class="a" style="left:1831.0px;top:609.3px" width="8" height="9" viewBox="0 0 8 9"><path d="M0.7 0.9h6.6L4.6 4.2v3.6L3.4 7V4.2z" fill="none" stroke="#f2f2f6" stroke-width="0.9" stroke-linejoin="round"/></svg>
<div class="t" style="left:1839.0px;top:608.5px;font-size:8.6px;color:#f4f4f8;font-weight:700;letter-spacing:-0.2px">Filter</div>
<div class="t" style="left:1082.2px;top:606.1px;font-size:13px;color:#f2f4f8;font-weight:400;"><span style="color:#5148cc">Sponsors</span> <span style="-webkit-text-stroke:0.35px #f2f4f8">Delivery Statistics</span></div>
<svg class="a" style="left:1060px;top:605px" width="17" height="15" viewBox="0 0 17 15"><circle cx="6" cy="4.5" r="3.3" fill="none" stroke="#5a52d0" stroke-width="1.2"/><path d="M0.8 14.5c0-3.2 2.4-5 5.2-5s5.2 1.8 5.2 5" fill="none" stroke="#5a52d0" stroke-width="1.2"/><path d="M13.5 4v5M11 6.5h5M11.8 4.7l3.4 3.6M15.2 4.7l-3.4 3.6" stroke="#5a52d0" stroke-width="1"/></svg>
<div class="a" style="left:1705px;top:600px;width:1px;height:29px;background:#1d2735"></div>
<div class="a" style="left:1732px;top:600px;width:1px;height:29px;background:#1d2735"></div>
<div class="a" style="left:1758px;top:600px;width:1px;height:29px;background:#1d2735"></div>
<div class="a" style="left:1784px;top:600px;width:1px;height:29px;background:#1d2735"></div>
<svg class="a" style="left:1715.0px;top:610.7px" width="8" height="8" viewBox="0 0 8 8"><path d="M0.8 0.6h6.4M0.8 7.3h6.4" stroke="#c8cad2" stroke-width="0.9"/><rect x="0.8" y="2.9" width="6.4" height="2" rx="1" fill="none" stroke="#c8cad2" stroke-width="0.9"/><path d="M2.5 3.9h.6M3.7 3.9h.6M4.9 3.9h.6" stroke="#c8cad2" stroke-width="0.8"/></svg>
<svg class="a" style="left:1744.0px;top:610.5px" width="3" height="8" viewBox="0 0 3 8"><circle cx="1.5" cy="1" r="0.9" fill="#c8cad2"/><circle cx="1.5" cy="4" r="0.9" fill="#c8cad2"/><circle cx="1.5" cy="7" r="0.9" fill="#c8cad2"/></svg>
<div class="a" style="left:1759px;top:601px;width:25px;height:27px;background:#4a40be"></div>
<svg class="a" style="left:1766.5px;top:609.7px" width="10" height="10" viewBox="0 0 10 10"><path d="M1 0.5v8.6h8.3M2 6.5l1.8-4 2 2.6L8.5 1" fill="none" stroke="#262a55" stroke-width="0.9"/></svg>
<svg class="a" style="left:1794.5px;top:610.5px" width="8" height="8" viewBox="0 0 8 8"><path d="M1.5 3.2v4.8M4.5 1v7M7 5.2v2.8" stroke="#c8cad2" stroke-width="1.2"/></svg>
<div class="a" style="left:201px;top:295px;width:819px;height:271px;border:1px solid #1d2735;border-radius:7px;background:#04070f"></div>
<div class="a" style="left:1054px;top:293px;width:819px;height:273px;border:1px solid #1d2735;border-radius:7px;background:#04070f"></div>
<div class="a" style="left:201px;top:639px;width:819px;height:271px;border:1px solid #1d2735;border-radius:7px;background:#04070f"></div>
<div class="a" style="left:1054px;top:639px;width:819px;height:271px;border:1px solid #1d2735;border-radius:7px;background:#04070f"></div>
<div class="t" style="left:174.7px;width:60px;text-align:right;top:309.7px;font-size:8px;color:#6f737b">4,500</div>
<div class="t" style="left:174.7px;width:60px;text-align:right;top:334.3px;font-size:8px;color:#6f737b">4,000</div>
<div class="t" style="left:174.7px;width:60px;text-align:right;top:359.0px;font-size:8px;color:#6f737b">3,500</div>
<div class="t" style="left:174.7px;width:60px;text-align:right;top:383.6px;font-size:8px;color:#6f737b">3,000</div>
<div class="t" style="left:174.7px;width:60px;text-align:right;top:408.3px;font-size:8px;color:#6f737b">2,500</div>
<div class="t" style="left:174.7px;width:60px;text-align:right;top:432.9px;font-size:8px;color:#6f737b">2,000</div>
<div class="t" style="left:174.7px;width:60px;text-align:right;top:457.6px;font-size:8px;color:#6f737b">1,500</div>
<div class="t" style="left:174.7px;width:60px;text-align:right;top:482.2px;font-size:8px;color:#6f737b">1,000</div>
<div class="t" style="left:174.7px;width:60px;text-align:right;top:506.9px;font-size:8px;color:#6f737b">500</div>
<div class="t" style="left:174.7px;width:60px;text-align:right;top:531.5px;font-size:8px;color:#6f737b">0</div>
<div class="a" style="left:273.8px;top:319.9px;width:14px;height:215.2px;background:#5850c2;border-radius:7px 7px 0 0"></div>
<div class="t" style="left:230.75px;width:100px;text-align:center;top:543.3px;font-size:8px;color:#6f737b">SE</div>
<div class="a" style="left:350.0px;top:473.8px;width:14px;height:61.3px;background:#5850c2;border-radius:7px 7px 0 0"></div>
<div class="t" style="left:307px;width:100px;text-align:center;top:543.3px;font-size:8px;color:#6f737b">DE</div>
<div class="a" style="left:426.8px;top:481.5px;width:14px;height:53.6px;background:#5850c2;border-radius:7px 7px 0 0"></div>
<div class="t" style="left:383.8px;width:100px;text-align:center;top:543.3px;font-size:8px;color:#6f737b">BE</div>
<div class="a" style="left:503.3px;top:485.2px;width:14px;height:49.9px;background:#5850c2;border-radius:7px 7px 0 0"></div>
<div class="t" style="left:460.3px;width:100px;text-align:center;top:543.3px;font-size:8px;color:#6f737b">NO</div>
<div class="a" style="left:580.1px;top:498px;width:14px;height:37.1px;background:#5850c2;border-radius:7px 7px 0 0"></div>
<div class="t" style="left:537.1px;width:100px;text-align:center;top:543.3px;font-size:8px;color:#6f737b">FR</div>
<div class="a" style="left:656.7px;top:502.8px;width:14px;height:32.3px;background:#5850c2;border-radius:7px 7px 0 0"></div>
<div class="t" style="left:613.7px;width:100px;text-align:center;top:543.3px;font-size:8px;color:#6f737b">AU</div>
<div class="a" style="left:732.9px;top:506.6px;width:14px;height:28.5px;background:#5850c2;border-radius:7px 7px 0 0"></div>
<div class="t" style="left:689.9px;width:100px;text-align:center;top:543.3px;font-size:8px;color:#6f737b">FI</div>
<div class="a" style="left:809.8px;top:519.8px;width:14px;height:15.3px;background:#5850c2;border-radius:7px 7px 0 0"></div>
<div class="t" style="left:766.8px;width:100px;text-align:center;top:543.3px;font-size:8px;color:#6f737b">IT</div>
<div class="a" style="left:886.5px;top:523.9px;width:14px;height:11.2px;background:#5850c2;border-radius:7px 7px 0 0"></div>
<div class="t" style="left:843.5px;width:100px;text-align:center;top:543.3px;font-size:8px;color:#6f737b">GB</div>
<div class="a" style="left:963.0px;top:525.8px;width:14px;height:9.3px;background:#5850c2;border-radius:7px 7px 0 0"></div>
<div class="t" style="left:920px;width:100px;text-align:center;top:543.3px;font-size:8px;color:#6f737b">US</div>
<div class="t" style="left:168.5px;width:60px;text-align:right;top:653.7px;font-size:8px;color:#6f737b">700</div>
<div class="t" style="left:168.5px;width:60px;text-align:right;top:685.4px;font-size:8px;color:#6f737b">600</div>
<div class="t" style="left:168.5px;width:60px;text-align:right;top:717.1px;font-size:8px;color:#6f737b">500</div>
<div class="t" style="left:168.5px;width:60px;text-align:right;top:748.8px;font-size:8px;color:#6f737b">400</div>
<div class="t" style="left:168.5px;width:60px;text-align:right;top:780.5px;font-size:8px;color:#6f737b">300</div>
<div class="t" style="left:168.5px;width:60px;text-align:right;top:812.2px;font-size:8px;color:#6f737b">200</div>
<div class="t" style="left:168.5px;width:60px;text-align:right;top:843.9px;font-size:8px;color:#6f737b">100</div>
<div class="t" style="left:168.5px;width:60px;text-align:right;top:875.6px;font-size:8px;color:#6f737b">0</div>
<div class="a" style="left:242.7px;top:737.6px;width:13.7px;height:141.6px;background:#5850c2;border-radius:6.85px 6.85px 0 0"></div>
<div class="t" style="left:199.5px;width:100px;text-align:center;top:887.7px;font-size:8px;color:#6f737b">01</div>
<div class="a" style="left:270.2px;top:772.9px;width:13.7px;height:106.3px;background:#5850c2;border-radius:6.85px 6.85px 0 0"></div>
<div class="t" style="left:227.10000000000002px;width:100px;text-align:center;top:887.7px;font-size:8px;color:#6f737b">02</div>
<div class="a" style="left:297.8px;top:667.6px;width:13.7px;height:211.6px;background:#5850c2;border-radius:6.85px 6.85px 0 0"></div>
<div class="t" style="left:254.7px;width:100px;text-align:center;top:887.7px;font-size:8px;color:#6f737b">03</div>
<div class="a" style="left:325.4px;top:677.6px;width:13.7px;height:201.6px;background:#5850c2;border-radius:6.85px 6.85px 0 0"></div>
<div class="t" style="left:282.3px;width:100px;text-align:center;top:887.7px;font-size:8px;color:#6f737b">04</div>
<div class="a" style="left:353.0px;top:725.9px;width:13.7px;height:153.3px;background:#5850c2;border-radius:6.85px 6.85px 0 0"></div>
<div class="t" style="left:309.9px;width:100px;text-align:center;top:887.7px;font-size:8px;color:#6f737b">05</div>
<div class="a" style="left:380.6px;top:785.1px;width:13.7px;height:94.1px;background:#5850c2;border-radius:6.85px 6.85px 0 0"></div>
<div class="t" style="left:337.5px;width:100px;text-align:center;top:887.7px;font-size:8px;color:#6f737b">06</div>
<div class="a" style="left:408.2px;top:723.1px;width:13.7px;height:156.1px;background:#5850c2;border-radius:6.85px 6.85px 0 0"></div>
<div class="t" style="left:365.1px;width:100px;text-align:center;top:887.7px;font-size:8px;color:#6f737b">07</div>
<div class="a" style="left:435.9px;top:724.8px;width:13.7px;height:154.4px;background:#5850c2;border-radius:6.85px 6.85px 0 0"></div>
<div class="t" style="left:392.70000000000005px;width:100px;text-align:center;top:887.7px;font-size:8px;color:#6f737b">08</div>
<div class="a" style="left:463.4px;top:776.9px;width:13.7px;height:102.3px;background:#5850c2;border-radius:6.85px 6.85px 0 0"></div>
<div class="t" style="left:420.3px;width:100px;text-align:center;top:887.7px;font-size:8px;color:#6f737b">09</div>
<div class="a" style="left:491.0px;top:696.9px;width:13.7px;height:182.3px;background:#5850c2;border-radius:6.85px 6.85px 0 0"></div>
<div class="t" style="left:447.9px;width:100px;text-align:center;top:887.7px;font-size:8px;color:#6f737b">10</div>
<div class="a" style="left:518.6px;top:763.8px;width:13.7px;height:115.4px;background:#5850c2;border-radius:6.85px 6.85px 0 0"></div>
<div class="t" style="left:475.5px;width:100px;text-align:center;top:887.7px;font-size:8px;color:#6f737b">11</div>
<div class="a" style="left:546.2px;top:757px;width:13.7px;height:122.2px;background:#5850c2;border-radius:6.85px 6.85px 0 0"></div>
<div class="t" style="left:503.1px;width:100px;text-align:center;top:887.7px;font-size:8px;color:#6f737b">12</div>
<div class="a" style="left:573.9px;top:729.9px;width:13.7px;height:149.3px;background:#5850c2;border-radius:6.85px 6.85px 0 0"></div>
<div class="t" style="left:530.7px;width:100px;text-align:center;top:887.7px;font-size:8px;color:#6f737b">13</div>
<div class="a" style="left:601.4px;top:856.1px;width:13.7px;height:23.1px;background:#5850c2;border-radius:6.85px 6.85px 0 0"></div>
<div class="t" style="left:558.3px;width:100px;text-align:center;top:887.7px;font-size:8px;color:#6f737b">14</div>
<div class="a" style="left:629.1px;top:750px;width:13.7px;height:129.2px;background:#5850c2;border-radius:6.85px 6.85px 0 0"></div>
<div class="t" style="left:585.9000000000001px;width:100px;text-align:center;top:887.7px;font-size:8px;color:#6f737b">15</div>
<div class="a" style="left:656.6px;top:781.5px;width:13.7px;height:97.7px;background:#5850c2;border-radius:6.85px 6.85px 0 0"></div>
<div class="t" style="left:613.5px;width:100px;text-align:center;top:887.7px;font-size:8px;color:#6f737b">16</div>
<div class="a" style="left:684.2px;top:789.9px;width:13.7px;height:89.3px;background:#5850c2;border-radius:6.85px 6.85px 0 0"></div>
<div class="t" style="left:641.1px;width:100px;text-align:center;top:887.7px;font-size:8px;color:#6f737b">17</div>
<div class="a" style="left:711.9px;top:708.1px;width:13.7px;height:171.1px;background:#5850c2;border-radius:6.85px 6.85px 0 0"></div>
<div class="t" style="left:668.7px;width:100px;text-align:center;top:887.7px;font-size:8px;color:#6f737b">18</div>
<div class="a" style="left:739.4px;top:778.5px;width:13.7px;height:100.7px;background:#5850c2;border-radius:6.85px 6.85px 0 0"></div>
<div class="t" style="left:696.3px;width:100px;text-align:center;top:887.7px;font-size:8px;color:#6f737b">19</div>
<div class="a" style="left:767.0px;top:750.6px;width:13.7px;height:128.6px;background:#5850c2;border-radius:6.85px 6.85px 0 0"></div>
<div class="t" style="left:723.9px;width:100px;text-align:center;top:887.7px;font-size:8px;color:#6f737b">20</div>
<div class="a" style="left:794.6px;top:792px;width:13.7px;height:87.2px;background:#5850c2;border-radius:6.85px 6.85px 0 0"></div>
<div class="t" style="left:751.5px;width:100px;text-align:center;top:887.7px;font-size:8px;color:#6f737b">21</div>
<div class="a" style="left:822.2px;top:754.8px;width:13.7px;height:124.4px;background:#5850c2;border-radius:6.85px 6.85px 0 0"></div>
<div class="t" style="left:779.1px;width:100px;text-align:center;top:887.7px;font-size:8px;color:#6f737b">22</div>
<div class="a" style="left:849.9px;top:759px;width:13.7px;height:120.2px;background:#5850c2;border-radius:6.85px 6.85px 0 0"></div>
<div class="t" style="left:806.7px;width:100px;text-align:center;top:887.7px;font-size:8px;color:#6f737b">23</div>
<div class="a" style="left:877.5px;top:821.7px;width:13.7px;height:57.5px;background:#5850c2;border-radius:6.85px 6.85px 0 0"></div>
<div class="t" style="left:834.3000000000001px;width:100px;text-align:center;top:887.7px;font-size:8px;color:#6f737b">24</div>
<div class="a" style="left:905.1px;top:786.3px;width:13.7px;height:92.9px;background:#5850c2;border-radius:6.85px 6.85px 0 0"></div>
<div class="t" style="left:861.9000000000001px;width:100px;text-align:center;top:887.7px;font-size:8px;color:#6f737b">25</div>
<div class="a" style="left:932.6px;top:793.8px;width:13.7px;height:85.4px;background:#5850c2;border-radius:6.85px 6.85px 0 0"></div>
<div class="t" style="left:889.5px;width:100px;text-align:center;top:887.7px;font-size:8px;color:#6f737b">26</div>
<div class="a" style="left:960.2px;top:804.6px;width:13.7px;height:74.6px;background:#5850c2;border-radius:6.85px 6.85px 0 0"></div>
<div class="t" style="left:917.1px;width:100px;text-align:center;top:887.7px;font-size:8px;color:#6f737b">27</div>
<div class="a" style="left:987.9px;top:768px;width:13.7px;height:111.2px;background:#5850c2;border-radius:6.85px 6.85px 0 0"></div>
<div class="t" style="left:944.7px;width:100px;text-align:center;top:887.7px;font-size:8px;color:#6f737b">28</div>
<div class="t" style="left:1042.8px;width:60px;text-align:right;top:653.6px;font-size:8px;color:#6f737b">3,500,000</div>
<div class="t" style="left:1042.8px;width:60px;text-align:right;top:685.3px;font-size:8px;color:#6f737b">3,000,000</div>
<div class="t" style="left:1042.8px;width:60px;text-align:right;top:717.1px;font-size:8px;color:#6f737b">2,500,000</div>
<div class="t" style="left:1042.8px;width:60px;text-align:right;top:748.8px;font-size:8px;color:#6f737b">2,000,000</div>
<div class="t" style="left:1042.8px;width:60px;text-align:right;top:780.5px;font-size:8px;color:#6f737b">1,500,000</div>
<div class="t" style="left:1042.8px;width:60px;text-align:right;top:812.2px;font-size:8px;color:#6f737b">1,000,000</div>
<div class="t" style="left:1042.8px;width:60px;text-align:right;top:844.0px;font-size:8px;color:#6f737b">500,000</div>
<div class="t" style="left:1042.8px;width:60px;text-align:right;top:875.7px;font-size:8px;color:#6f737b">0</div>
<svg class="a" style="left:0;top:0" width="1890" height="914" viewBox="0 0 1890 914">
<path d="M1109.9 668.6 L1253.5 697.4 L1396.9 722.5 L1540.1 724.4 L1684 824.7 L1827 867.4" fill="none" stroke="#5a50d2" stroke-width="2" stroke-linejoin="round"/>
<circle cx="1109.9" cy="668.6" r="2" fill="#04070f" stroke="#5a50d2" stroke-width="1"/>
<circle cx="1253.5" cy="697.4" r="2" fill="#04070f" stroke="#5a50d2" stroke-width="1"/>
<circle cx="1396.9" cy="722.5" r="2" fill="#04070f" stroke="#5a50d2" stroke-width="1"/>
<circle cx="1540.1" cy="724.4" r="2" fill="#04070f" stroke="#5a50d2" stroke-width="1"/>
<circle cx="1684" cy="824.7" r="2" fill="#04070f" stroke="#5a50d2" stroke-width="1"/>
<circle cx="1827" cy="867.4" r="2" fill="#04070f" stroke="#5a50d2" stroke-width="1"/>
</svg>
<div class="t" style="left:1059.9px;width:100px;text-align:center;top:887.7px;font-size:8px;color:#6f737b">B2_Bizaglo</div>
<div class="t" style="left:1203.5px;width:100px;text-align:center;top:887.7px;font-size:8px;color:#6f737b">L1_Lola_Leads</div>
<div class="t" style="left:1346.9px;width:100px;text-align:center;top:887.7px;font-size:8px;color:#6f737b">SD1_ShepherDigital</div>
<div class="t" style="left:1490.1px;width:100px;text-align:center;top:887.7px;font-size:8px;color:#6f737b">M1_MailMagnet</div>
<div class="t" style="left:1634px;width:100px;text-align:center;top:887.7px;font-size:8px;color:#6f737b">SP1_Sphinxads</div>
<div class="t" style="left:1777px;width:100px;text-align:center;top:887.7px;font-size:8px;color:#6f737b">S1_Load_Smooth</div>
<svg class="a" style="left:0;top:0" width="1890" height="914" viewBox="0 0 1890 914">
<path d="M1284.0 331.5L1290.6 326.3L1295.2 329.5L1301.8 328.9L1303.1 326.3L1311.0 323.6L1316.9 322.3L1324.1 324.3L1330.7 325.3L1341.2 323.6L1345.0 321.7L1354.4 315.2L1366.7 312.3L1377.5 310.8L1385.4 307.9L1397.0 306.2L1390.5 316.6L1395.6 321.7L1399.9 328.9L1395.6 331.1L1394.1 336.1L1391.2 337.6L1394.1 343.3L1398.4 350.6L1400.6 357.1L1394.2 357.7L1383.5 362.3L1377.4 365.3L1371.3 369.9L1368.2 375.3L1363.6 379.1L1362.1 382.9L1361.3 388.3L1359.0 383.7L1355.9 382.2L1344.5 382.9L1340.6 388.3L1341.4 395.9L1346.0 398.2L1351.3 394.4L1350.6 399.8L1355.9 403.6L1355.9 409.7L1362.1 413.6L1359.0 415.1L1354.4 411.3L1346.8 405.1L1339.1 402.1L1329.9 395.9L1325.3 391.3L1320.7 385.2L1317.7 376.8L1316.1 369.1L1318.5 358.0L1317.5 344.6L1314.9 339.4L1309.6 338.1L1301.8 340.7L1296.5 342.7L1284.0 347.3L1284.7 346.6L1295.9 342.0L1291.3 338.1L1291.3 335.5L1286.7 333.5Z" fill="#dde2ea"/>
<path d="M1362.3 339.7L1366.7 335.4L1373.9 333.9L1378.2 337.6L1376.8 343.3L1372.4 350.6L1371.0 346.9L1363.1 341.9Z" fill="#04070f"/>
<path d="M1373.9 321.7L1377.5 320.9L1376.8 326.0L1373.9 325.3Z" fill="#04070f"/>
<path d="M1378.9 327.4L1385.4 325.3L1388.3 330.3L1382.6 333.2L1378.9 331.8Z" fill="#04070f"/>
<path d="M1356.0 319.8L1362.0 318.8L1361.0 320.6Z" fill="#04070f"/>
<path d="M1366.0 316.5L1371.0 316.0L1370.0 318.0Z" fill="#04070f"/>
<path d="M1380.0 313.5L1386.0 313.0L1384.0 315.5Z" fill="#04070f"/>
<path d="M1385.4 354.9L1395.6 352.0L1391.2 359.2L1385.4 361.4Z" fill="#04070f"/>
<path d="M1322.3 380.6L1326.1 392.1L1324.5 391.3L1321.5 383.7Z" fill="#04070f"/>
<path d="M1399.2 313.0L1402.8 313.0L1399.2 306.0L1410.0 306.5L1424.5 305.1L1438.9 305.4L1449.7 307.2L1442.5 314.4L1438.9 323.8L1428.1 328.9L1417.2 334.7L1413.6 339.4L1408.6 336.1L1407.1 328.9L1408.6 318.1L1402.8 313.5Z" fill="#dde2ea"/>
<path d="M1435.3 330.3L1444.7 329.6L1445.4 332.5L1438.9 333.9L1436.0 332.5Z" fill="#dde2ea"/>
<path d="M1355.9 392.9L1363.6 393.6L1371.3 397.5L1368.2 397.9L1357.5 394.4Z" fill="#dde2ea"/>
<path d="M1367.4 398.2L1375.9 399.0L1375.1 399.8L1368.2 399.8Z" fill="#dde2ea"/>
<path d="M1361.2 414.1L1369.8 408.4L1381.1 409.9L1385.4 414.1L1395.4 422.7L1408.2 429.8L1414.6 434.0L1413.8 439.7L1409.6 448.2L1408.2 456.8L1401.0 462.5L1396.8 471.0L1391.1 479.5L1385.4 486.6L1384.0 493.7L1388.2 503.7L1382.6 502.3L1376.9 493.7L1374.0 479.5L1374.0 465.3L1372.6 452.5L1364.1 444.0L1358.4 434.0L1358.4 425.5L1361.2 418.4Z" fill="#dde2ea"/>
<path d="M1448.4 371.8L1447.1 362.6L1456.2 361.3L1455.3 358.0L1453.1 354.7L1452.0 353.5L1460.8 351.4L1468.4 347.0L1472.8 344.8L1478.0 344.0L1482.0 341.0L1484.0 336.0L1483.0 333.0L1482.0 328.0L1486.0 324.0L1492.0 323.0L1500.0 325.5L1507.8 325.2L1516.6 323.0L1523.1 319.7L1533.0 314.2L1540.0 310.9L1553.1 314.2L1556.4 318.6L1575.0 321.9L1591.4 321.3L1605.7 324.1L1622.1 324.1L1629.8 329.6L1636.9 335.0L1630.9 343.8L1628.7 352.5L1623.2 346.0L1621.0 338.3L1616.6 337.2L1603.5 341.6L1602.4 346.0L1611.1 348.2L1616.6 356.9L1615.5 361.3L1610.0 365.7L1606.8 370.1L1610.0 376.6L1605.7 377.7L1601.3 370.0L1596.9 367.9L1599.1 374.4L1603.5 383.2L1601.3 391.9L1592.5 396.3L1589.0 397.0L1593.4 398.0L1594.9 406.8L1588.8 412.9L1582.7 406.8L1581.2 409.8L1587.3 423.6L1584.2 423.6L1579.6 412.9L1576.6 402.2L1573.5 402.2L1568.9 393.7L1565.8 394.5L1558.2 403.7L1554.4 413.6L1547.5 396.0L1542.9 392.2L1538.3 389.1L1529.1 388.4L1526.8 387.6L1531.4 393.0L1525.3 402.2L1514.0 407.5L1512.5 404.5L1502.5 385.5L1501.0 379.5L1500.5 374.0L1492.0 373.5L1489.0 369.5L1486.0 371.0L1481.0 369.0L1478.0 371.5L1474.0 366.0L1471.0 362.0L1466.0 363.5L1461.0 368.0L1454.0 372.5Z" fill="#dde2ea"/>
<path d="M1490.4 360.5L1497.0 360.0L1504.8 363.9L1498.2 366.6L1491.7 365.2Z" fill="#04070f"/>
<path d="M1514.0 359.5L1516.5 360.0L1519.2 367.9L1517.9 370.5L1514.0 363.9Z" fill="#04070f"/>
<path d="M1517.5 383.5L1525.5 387.8L1523.5 389.5L1517.5 385.5Z" fill="#04070f"/>
<path d="M1447.0 379.0L1455.0 375.5L1463.0 374.5L1472.0 375.0L1480.0 380.0L1486.0 379.0L1498.0 380.5L1499.0 387.0L1509.5 407.5L1521.9 404.6L1520.6 412.5L1511.4 425.6L1508.7 433.5L1508.7 445.3L1502.2 455.8L1493.0 468.9L1482.5 474.2L1478.6 465.0L1473.3 450.6L1474.6 438.7L1469.4 423.0L1462.8 416.4L1448.4 417.7L1439.2 408.6L1437.9 395.4L1441.8 386.2Z" fill="#dde2ea"/>
<path d="M1518.5 442.5L1521.5 444.5L1516.5 460.5L1512.5 461.0L1512.0 455.0Z" fill="#dde2ea"/>
<path d="M1556.7 411.3L1559.7 412.9L1559.7 415.9L1557.4 415.9Z" fill="#dde2ea"/>
<path d="M1595.3 474.3L1595.9 459.8L1609.7 450.2L1620.6 441.8L1626.6 443.0L1629.0 449.0L1635.0 440.6L1637.4 449.0L1643.4 461.0L1641.0 471.8L1632.6 479.1L1624.2 480.3L1620.6 474.3L1615.7 471.8L1606.1 471.8Z" fill="#dfab3a"/>
<path d="M1624.2 482.7L1629.0 482.7L1626.6 487.5Z" fill="#dfab3a"/>
<path d="M1644.0 491.5L1655.0 484.0L1661.0 480.0L1662.5 475.5L1666.5 479.5L1656.0 488.0L1646.0 494.0Z" fill="#dde2ea"/>
<path d="M1621.8 426.1L1635.0 428.5L1644.6 430.9L1648.2 433.3L1642.2 438.1L1635.0 438.1L1625.4 430.9Z" fill="#dde2ea"/>
<path d="M1594.1 422.5L1604.9 416.5L1606.1 426.1L1601.3 430.9L1595.3 429.7Z" fill="#dde2ea"/>
<path d="M1577.2 417.7L1584.4 421.3L1590.5 429.7L1589.3 432.1L1580.8 424.9Z" fill="#dde2ea"/>
<path d="M1590.5 433.3L1606.1 436.9L1613.3 438.1L1608.5 439.3L1590.5 435.7Z" fill="#dde2ea"/>
<path d="M1606.1 398.4L1610.9 404.4L1614.5 414.1L1610.9 414.1L1606.1 408.1Z" fill="#dde2ea"/>
<path d="M1606.1 421.3L1614.5 420.1L1610.9 429.7L1607.3 428.5Z" fill="#dde2ea"/>
<path d="M1619.9 364.6L1626.5 359.1L1623.2 370.0L1621.0 376.6L1613.3 381.0L1612.2 377.7L1618.8 371.1Z" fill="#dde2ea"/>
<path d="M1623.2 338.3L1629.8 343.8L1628.7 351.4L1625.4 347.1Z" fill="#dde2ea"/>
<path d="M1452.0 341.6L1456.4 341.6L1459.7 349.2L1460.8 352.5L1453.1 353.6L1454.2 348.1Z" fill="#dfab3a"/>
<path d="M1447.7 347.0L1452.0 345.9L1450.9 350.3L1447.7 350.3Z" fill="#dde2ea"/>
<path d="M1453.1 354.7L1460.8 351.4L1466.3 352.5L1467.3 361.3L1463.0 364.5L1457.5 362.3L1455.3 358.0Z" fill="#dfab3a"/>
<path d="M1464.1 336.1L1472.8 326.3L1483.8 323.0L1487.0 325.2L1480.5 331.7L1478.3 339.4L1472.8 344.8L1469.5 341.6L1466.3 340.5Z" fill="#dfab3a"/>
<path d="M1467.3 310.9L1479.4 309.8L1478.3 314.2L1472.8 314.2Z" fill="#dfab3a"/>
<path d="M1505.6 319.7L1515.5 314.2L1516.6 315.3L1507.8 321.9Z" fill="#dde2ea"/>
<path d="M1575.0 316.4L1588.2 317.5L1581.6 321.9L1576.1 320.8Z" fill="#dde2ea"/>
<path d="M1497.0 309.0L1510.0 308.5L1509.0 311.0L1498.0 311.0Z" fill="#dde2ea"/>
</svg>
</body></html>
